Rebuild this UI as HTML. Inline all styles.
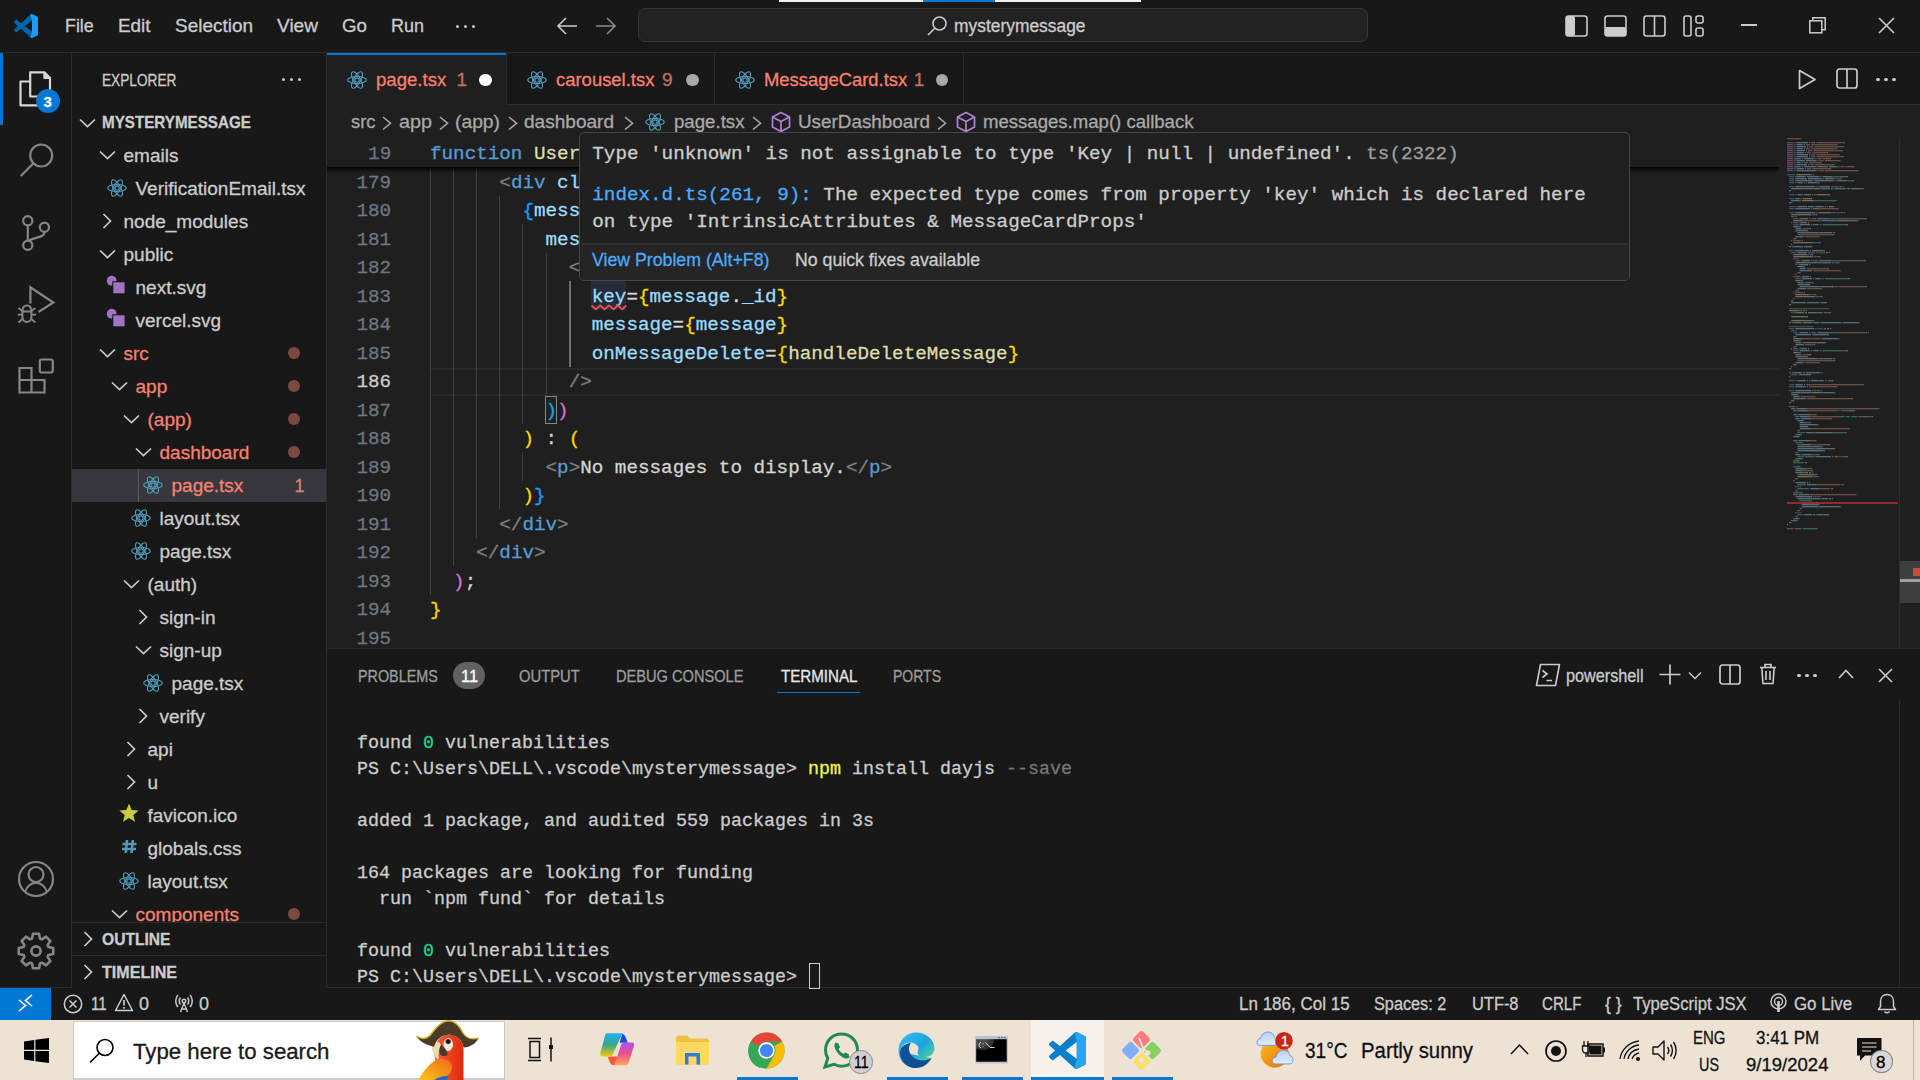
<!DOCTYPE html>
<html><head><meta charset="utf-8"><style>
html,body{margin:0;padding:0;width:1920px;height:1080px;overflow:hidden;background:#181818;}
.a{position:absolute;}
.t{position:absolute;white-space:pre;line-height:1em;transform-origin:0 0;-webkit-text-stroke:0.3px currentColor;}
svg.a{overflow:visible;}
</style></head><body>
<div class="a" style="left:0px;top:0px;width:1920px;height:52px;background:#181818;"></div>
<div class="a" style="left:0px;top:52px;width:1920px;height:1px;background:#2b2b2b;"></div>
<div class="a" style="left:0px;top:53px;width:71px;height:935px;background:#181818;"></div>
<div class="a" style="left:71px;top:53px;width:1px;height:935px;background:#2b2b2b;"></div>
<div class="a" style="left:72px;top:53px;width:254px;height:935px;background:#181818;"></div>
<div class="a" style="left:326px;top:53px;width:1px;height:935px;background:#2b2b2b;"></div>
<div class="a" style="left:327px;top:53px;width:1593px;height:51px;background:#181818;"></div>
<div class="a" style="left:327px;top:104px;width:1593px;height:1px;background:#2b2b2b;"></div>
<div class="a" style="left:327px;top:105px;width:1593px;height:543px;background:#1f1f1f;"></div>
<div class="a" style="left:327px;top:648px;width:1593px;height:1px;background:#2b2b2b;"></div>
<div class="a" style="left:327px;top:649px;width:1593px;height:339px;background:#181818;"></div>
<div class="a" style="left:0px;top:987px;width:1920px;height:1px;background:#2b2b2b;"></div>
<div class="a" style="left:0px;top:988px;width:1920px;height:32px;background:#181818;"></div>
<div class="a" style="left:0px;top:1020px;width:1920px;height:60px;background:#eee2d5;"></div>
<svg class="a" style="left:14px;top:14px;" width="24" height="24" viewBox="0 0 24 24"><path fill="#0065a9" d="M23.15 2.587L18.21.21a1.494 1.494 0 0 0-1.705.29l-9.46 8.63-4.12-3.128a.999.999 0 0 0-1.276.057L.327 7.261A1 1 0 0 0 .326 8.74L3.899 12 .326 15.26a1 1 0 0 0 .001 1.479L1.65 17.94a.999.999 0 0 0 1.276.057l4.12-3.128 9.46 8.63a1.492 1.492 0 0 0 1.704.29l4.942-2.377A1.5 1.5 0 0 0 24 20.06V3.939a1.5 1.5 0 0 0-.85-1.352zm-5.146 14.861L10.826 12l7.178-5.448v10.896z"/><path fill="#1f9cf0" d="M18.21.21a1.494 1.494 0 0 0-1.705.29L18.004 6.552v10.896L16.505 23.5a1.492 1.492 0 0 0 1.704.29l4.942-2.377A1.5 1.5 0 0 0 24 20.06V3.939a1.5 1.5 0 0 0-.85-1.352z"/></svg>
<div class="t" id="t0" style="transform:scaleX(0.9388);left:65px;top:16.42px;font-size:19px;font-family:'Liberation Sans', sans-serif;color:#cccccc;font-weight:400;">File</div>
<div class="t" id="t1" style="transform:scaleX(0.9924);left:118px;top:16.42px;font-size:19px;font-family:'Liberation Sans', sans-serif;color:#cccccc;font-weight:400;">Edit</div>
<div class="t" id="t2" style="transform:scaleX(0.9978);left:174.5px;top:16.42px;font-size:19px;font-family:'Liberation Sans', sans-serif;color:#cccccc;font-weight:400;">Selection</div>
<div class="t" id="t3" style="transform:scaleX(1.0038);left:277px;top:16.42px;font-size:19px;font-family:'Liberation Sans', sans-serif;color:#cccccc;font-weight:400;">View</div>
<div class="t" id="t4" style="transform:scaleX(0.9858);left:341.75px;top:16.42px;font-size:19px;font-family:'Liberation Sans', sans-serif;color:#cccccc;font-weight:400;">Go</div>
<div class="t" id="t5" style="transform:scaleX(0.9467);left:391.25px;top:16.42px;font-size:19px;font-family:'Liberation Sans', sans-serif;color:#cccccc;font-weight:400;">Run</div>
<div class="a" style="left:455.5px;top:24.5px;width:3px;height:3px;background:#cccccc;border-radius:50%;"></div>
<div class="a" style="left:463.5px;top:24.5px;width:3px;height:3px;background:#cccccc;border-radius:50%;"></div>
<div class="a" style="left:471.5px;top:24.5px;width:3px;height:3px;background:#cccccc;border-radius:50%;"></div>
<svg class="a" style="left:556px;top:16px;" width="22" height="20" viewBox="0 0 22 20"><path d="M2 10h19M10 2L2 10l8 8" fill="none" stroke="#cccccc" stroke-width="1.6"/></svg>
<svg class="a" style="left:595px;top:16px;" width="22" height="20" viewBox="0 0 22 20"><path d="M1 10h19M12 2l8 8-8 8" fill="none" stroke="#8a8a8a" stroke-width="1.6"/></svg>
<div class="a" style="left:638px;top:8px;width:730px;height:34px;background:#222222;box-sizing:border-box;border:1px solid #363636;border-radius:7px;"></div>
<svg class="a" style="left:926px;top:15px;" width="22" height="22" viewBox="0 0 22 22"><circle cx="13.5" cy="8.5" r="6.5" fill="none" stroke="#cccccc" stroke-width="1.6"/><path d="M9 13L2 20" stroke="#cccccc" stroke-width="1.6"/></svg>
<div class="t" id="t6" style="transform:scaleX(0.9666);left:954px;top:16.76px;font-size:18px;font-family:'Liberation Sans', sans-serif;color:#cccccc;font-weight:400;">mysterymessage</div>
<div class="a" style="left:779px;top:0px;width:144px;height:2px;background:#f0f0f0;"></div>
<div class="a" style="left:923px;top:0px;width:72px;height:2px;background:#0078d4;"></div>
<div class="a" style="left:995px;top:0px;width:146px;height:2px;background:#f0f0f0;"></div>
<svg class="a" style="left:1565px;top:15px;" width="23" height="22" viewBox="0 0 23 22"><rect x="1" y="1" width="21" height="20" rx="2.5" fill="none" stroke="#cccccc" stroke-width="1.6"/><rect x="1" y="1" width="9" height="20" rx="2" fill="#cccccc"/></svg>
<svg class="a" style="left:1604px;top:15px;" width="23" height="22" viewBox="0 0 23 22"><rect x="1" y="1" width="21" height="20" rx="2.5" fill="none" stroke="#cccccc" stroke-width="1.6"/><rect x="1" y="12" width="21" height="9" rx="2" fill="#cccccc"/></svg>
<svg class="a" style="left:1643px;top:15px;" width="23" height="22" viewBox="0 0 23 22"><rect x="1" y="1" width="21" height="20" rx="2.5" fill="none" stroke="#cccccc" stroke-width="1.6"/><path d="M11.5 1v20" stroke="#cccccc" stroke-width="1.6"/></svg>
<svg class="a" style="left:1683px;top:15px;" width="22" height="22" viewBox="0 0 22 22"><rect x="1" y="1" width="7" height="20" rx="2" fill="none" stroke="#cccccc" stroke-width="1.6"/><rect x="13" y="1" width="7" height="7" rx="2" fill="none" stroke="#cccccc" stroke-width="1.6"/><rect x="13" y="13" width="7" height="8" rx="2" fill="none" stroke="#cccccc" stroke-width="1.6"/></svg>
<div class="a" style="left:1741px;top:24px;width:15.5px;height:1.6px;background:#cccccc;"></div>
<svg class="a" style="left:1809px;top:17px;" width="17" height="17" viewBox="0 0 17 17"><rect x="0.8" y="3.8" width="12" height="12" fill="none" stroke="#cccccc" stroke-width="1.5"/><path d="M3.8 3.8V0.8h12.4v12h-3.4" fill="none" stroke="#cccccc" stroke-width="1.5"/></svg>
<svg class="a" style="left:1878px;top:17px;" width="17" height="17" viewBox="0 0 17 17"><path d="M1 1l15 15M16 1L1 16" stroke="#cccccc" stroke-width="1.6"/></svg>
<div class="a" style="left:0px;top:53px;width:3px;height:72px;background:#0078d4;"></div>
<svg class="a" style="left:0px;top:0px;" width="72" height="130" viewBox="0 0 72 130"><g fill="none" stroke="#d7d7d7" stroke-width="2.2" stroke-linejoin="round">
<path d="M30.2 72.3H44.4L50 78V96.5H30.2Z"/><path d="M44.4 72.3V78H50" fill="#d7d7d7"/>
<path d="M30 81.5H20.5V105.3H39"/></g>
<circle cx="48" cy="101" r="12" fill="#0078d4"/></svg>
<div class="t" id="t7" style="left:43.5px;top:94.30px;font-size:15px;font-family:'Liberation Sans', sans-serif;color:#ffffff;font-weight:700;">3</div>
<svg class="a" style="left:0px;top:130px;" width="72" height="300" viewBox="0 0 72 300"><g fill="none" stroke="#868686" stroke-width="2.2">
<circle cx="41.2" cy="25.5" r="11"/><path d="M33.2 33.5L20.8 46"/>
<circle cx="27.8" cy="90.7" r="4.6"/><circle cx="27.8" cy="115.3" r="4.6"/><circle cx="44.4" cy="97.3" r="4.6"/>
<path d="M27.8 95.3V110.7"/><path d="M44.4 101.9C44.4 108 36 106.5 28.5 110.8"/>
<path d="M30.4 173.6V157.4L53.3 172.5L38.5 182"/>
<path d="M22.4 181.5C22.4 177.5 24.5 175.4 26.9 175.4C29.3 175.4 31.4 177.5 31.4 181.5ZM22.4 181.5V187C22.4 190 24.5 192 26.9 192C29.3 192 31.4 190 31.4 187V181.5" stroke-width="2"/>
<path d="M18.5 178L22.4 181M35.3 178L31.4 181M17.8 184.7H22.4M31.4 184.7H36M18.5 192.5L22.4 189M35.3 192.5L31.4 189" stroke-width="1.8"/>
<path d="M19.5 238H31.5V250H19.5ZM31.5 250V262.5H19.5V250M31.5 250H44.5V262.5H31.5"/>
<rect x="39.8" y="229.5" width="13" height="13" rx="2"/>
</g></svg>
<svg class="a" style="left:0px;top:850px;" width="72" height="130" viewBox="0 0 72 130"><g fill="none" stroke="#868686" stroke-width="2.2">
<circle cx="36" cy="29" r="17"/><circle cx="36" cy="24.5" r="7.5"/><path d="M25 42C27 36 31 33 36 33C41 33 45 36 47 42"/>
</g></svg>
<svg class="a" style="left:0px;top:0px;" width="72" height="1000" viewBox="0 0 72 1000"><path d="M53.23 947.96 L53.23 954.04 L48.36 955.02 L47.58 956.90 L50.34 961.04 L46.04 965.34 L41.90 962.58 L40.02 963.36 L39.04 968.23 L32.96 968.23 L31.98 963.36 L30.10 962.58 L25.96 965.34 L21.66 961.04 L24.42 956.90 L23.64 955.02 L18.77 954.04 L18.77 947.96 L23.64 946.98 L24.42 945.10 L21.66 940.96 L25.96 936.66 L30.10 939.42 L31.98 938.64 L32.96 933.77 L39.04 933.77 L40.02 938.64 L41.90 939.42 L46.04 936.66 L50.34 940.96 L47.58 945.10 L48.36 946.98Z" fill="none" stroke="#868686" stroke-width="2.6" stroke-linejoin="round"/><circle cx="36" cy="951" r="4.6" fill="none" stroke="#868686" stroke-width="2.6"/></svg>
<div class="t" id="t8" style="transform:scaleX(0.8289);left:102.4px;top:72.03px;font-size:16.5px;font-family:'Liberation Sans', sans-serif;color:#cccccc;font-weight:400;">EXPLORER</div>
<div class="a" style="left:281.9px;top:77.5px;width:3.2px;height:3.2px;background:#cccccc;border-radius:50%;"></div>
<div class="a" style="left:289.9px;top:77.5px;width:3.2px;height:3.2px;background:#cccccc;border-radius:50%;"></div>
<div class="a" style="left:297.9px;top:77.5px;width:3.2px;height:3.2px;background:#cccccc;border-radius:50%;"></div>
<svg class="a" style="left:78.5px;top:117.5px;" width="17" height="10" viewBox="0 0 17 10"><path d="M1 1.5L8.5 8.5L16 1.5" fill="none" stroke="#cccccc" stroke-width="1.7"/></svg>
<div class="t" id="t9" style="transform:scaleX(0.9210);left:102.4px;top:113.93px;font-size:16.5px;font-family:'Liberation Sans', sans-serif;color:#cccccc;font-weight:700;">MYSTERYMESSAGE</div>
<div class="a" style="left:72px;top:468.5px;width:254px;height:33px;background:#37373d;"></div>
<div class="a" style="left:138px;top:468.5px;width:1px;height:33px;background:#585858;"></div>
<svg class="a" style="left:98.5px;top:150.0px;" width="17" height="10" viewBox="0 0 17 10"><path d="M1 1.5L8.5 8.5L16 1.5" fill="none" stroke="#cccccc" stroke-width="1.7"/></svg>
<div class="t" id="t10" style="left:123.5px;top:145.72px;font-size:19px;font-family:'Liberation Sans', sans-serif;color:#cccccc;font-weight:400;">emails</div>
<svg class="a" style="left:105.7px;top:176.7px;" width="22" height="22" viewBox="0 0 22 22"><g fill="none" stroke="#519aba" stroke-width="1.15"><ellipse cx="11" cy="11" rx="9.3" ry="3.5"/><ellipse cx="11" cy="11" rx="9.3" ry="3.5" transform="rotate(60 11 11)"/><ellipse cx="11" cy="11" rx="9.3" ry="3.5" transform="rotate(120 11 11)"/><circle cx="11" cy="11" r="2.2"/></g></svg>
<div class="t" id="t11" style="left:135.5px;top:178.72px;font-size:19px;font-family:'Liberation Sans', sans-serif;color:#cccccc;font-weight:400;">VerificationEmail.tsx</div>
<svg class="a" style="left:102.0px;top:213.0px;" width="10" height="16" viewBox="0 0 10 16"><path d="M1.5 1L8.5 8.0L1.5 15" fill="none" stroke="#cccccc" stroke-width="1.7"/></svg>
<div class="t" id="t12" style="left:123.5px;top:211.72px;font-size:19px;font-family:'Liberation Sans', sans-serif;color:#cccccc;font-weight:400;">node_modules</div>
<svg class="a" style="left:98.5px;top:249.0px;" width="17" height="10" viewBox="0 0 17 10"><path d="M1 1.5L8.5 8.5L16 1.5" fill="none" stroke="#cccccc" stroke-width="1.7"/></svg>
<div class="t" id="t13" style="left:123.5px;top:244.72px;font-size:19px;font-family:'Liberation Sans', sans-serif;color:#cccccc;font-weight:400;">public</div>
<svg class="a" style="left:107.2px;top:276.0px;" width="20" height="20" viewBox="0 0 20 20"><circle cx="4.7" cy="4.7" r="4.9" fill="#a074c4"/><rect x="5.3" y="5.3" width="12.5" height="12" fill="#181818"/><rect x="6.3" y="6.3" width="11.3" height="11" fill="#a074c4"/></svg>
<div class="t" id="t14" style="left:135.5px;top:277.72px;font-size:19px;font-family:'Liberation Sans', sans-serif;color:#cccccc;font-weight:400;">next.svg</div>
<svg class="a" style="left:107.2px;top:309.0px;" width="20" height="20" viewBox="0 0 20 20"><circle cx="4.7" cy="4.7" r="4.9" fill="#a074c4"/><rect x="5.3" y="5.3" width="12.5" height="12" fill="#181818"/><rect x="6.3" y="6.3" width="11.3" height="11" fill="#a074c4"/></svg>
<div class="t" id="t15" style="left:135.5px;top:310.72px;font-size:19px;font-family:'Liberation Sans', sans-serif;color:#cccccc;font-weight:400;">vercel.svg</div>
<svg class="a" style="left:98.5px;top:348.0px;" width="17" height="10" viewBox="0 0 17 10"><path d="M1 1.5L8.5 8.5L16 1.5" fill="none" stroke="#cccccc" stroke-width="1.7"/></svg>
<div class="t" id="t16" style="left:123.5px;top:343.72px;font-size:19px;font-family:'Liberation Sans', sans-serif;color:#f88070;font-weight:400;">src</div>
<div class="a" style="left:288px;top:346.5px;width:12px;height:12px;background:#7a4a42;border-radius:50%;"></div>
<svg class="a" style="left:110.5px;top:381.0px;" width="17" height="10" viewBox="0 0 17 10"><path d="M1 1.5L8.5 8.5L16 1.5" fill="none" stroke="#cccccc" stroke-width="1.7"/></svg>
<div class="t" id="t17" style="left:135.5px;top:376.72px;font-size:19px;font-family:'Liberation Sans', sans-serif;color:#f88070;font-weight:400;">app</div>
<div class="a" style="left:288px;top:379.5px;width:12px;height:12px;background:#7a4a42;border-radius:50%;"></div>
<svg class="a" style="left:122.5px;top:414.0px;" width="17" height="10" viewBox="0 0 17 10"><path d="M1 1.5L8.5 8.5L16 1.5" fill="none" stroke="#cccccc" stroke-width="1.7"/></svg>
<div class="t" id="t18" style="left:147.5px;top:409.72px;font-size:19px;font-family:'Liberation Sans', sans-serif;color:#f88070;font-weight:400;">(app)</div>
<div class="a" style="left:288px;top:412.5px;width:12px;height:12px;background:#7a4a42;border-radius:50%;"></div>
<svg class="a" style="left:134.5px;top:447.0px;" width="17" height="10" viewBox="0 0 17 10"><path d="M1 1.5L8.5 8.5L16 1.5" fill="none" stroke="#cccccc" stroke-width="1.7"/></svg>
<div class="t" id="t19" style="left:159.5px;top:442.72px;font-size:19px;font-family:'Liberation Sans', sans-serif;color:#f88070;font-weight:400;">dashboard</div>
<div class="a" style="left:288px;top:445.5px;width:12px;height:12px;background:#7a4a42;border-radius:50%;"></div>
<svg class="a" style="left:141.7px;top:473.7px;" width="22" height="22" viewBox="0 0 22 22"><g fill="none" stroke="#519aba" stroke-width="1.15"><ellipse cx="11" cy="11" rx="9.3" ry="3.5"/><ellipse cx="11" cy="11" rx="9.3" ry="3.5" transform="rotate(60 11 11)"/><ellipse cx="11" cy="11" rx="9.3" ry="3.5" transform="rotate(120 11 11)"/><circle cx="11" cy="11" r="2.2"/></g></svg>
<div class="t" id="t20" style="left:171.5px;top:475.72px;font-size:19px;font-family:'Liberation Sans', sans-serif;color:#f88070;font-weight:400;">page.tsx</div>
<div class="t" id="t21" style="left:294.5px;top:476.56px;font-size:18px;font-family:'Liberation Sans', sans-serif;color:#d9826f;font-weight:400;">1</div>
<svg class="a" style="left:129.7px;top:506.70000000000005px;" width="22" height="22" viewBox="0 0 22 22"><g fill="none" stroke="#519aba" stroke-width="1.15"><ellipse cx="11" cy="11" rx="9.3" ry="3.5"/><ellipse cx="11" cy="11" rx="9.3" ry="3.5" transform="rotate(60 11 11)"/><ellipse cx="11" cy="11" rx="9.3" ry="3.5" transform="rotate(120 11 11)"/><circle cx="11" cy="11" r="2.2"/></g></svg>
<div class="t" id="t22" style="left:159.5px;top:508.72px;font-size:19px;font-family:'Liberation Sans', sans-serif;color:#cccccc;font-weight:400;">layout.tsx</div>
<svg class="a" style="left:129.7px;top:539.7px;" width="22" height="22" viewBox="0 0 22 22"><g fill="none" stroke="#519aba" stroke-width="1.15"><ellipse cx="11" cy="11" rx="9.3" ry="3.5"/><ellipse cx="11" cy="11" rx="9.3" ry="3.5" transform="rotate(60 11 11)"/><ellipse cx="11" cy="11" rx="9.3" ry="3.5" transform="rotate(120 11 11)"/><circle cx="11" cy="11" r="2.2"/></g></svg>
<div class="t" id="t23" style="left:159.5px;top:541.72px;font-size:19px;font-family:'Liberation Sans', sans-serif;color:#cccccc;font-weight:400;">page.tsx</div>
<svg class="a" style="left:122.5px;top:579.0px;" width="17" height="10" viewBox="0 0 17 10"><path d="M1 1.5L8.5 8.5L16 1.5" fill="none" stroke="#cccccc" stroke-width="1.7"/></svg>
<div class="t" id="t24" style="left:147.5px;top:574.72px;font-size:19px;font-family:'Liberation Sans', sans-serif;color:#cccccc;font-weight:400;">(auth)</div>
<svg class="a" style="left:138.0px;top:609.0px;" width="10" height="16" viewBox="0 0 10 16"><path d="M1.5 1L8.5 8.0L1.5 15" fill="none" stroke="#cccccc" stroke-width="1.7"/></svg>
<div class="t" id="t25" style="left:159.5px;top:607.72px;font-size:19px;font-family:'Liberation Sans', sans-serif;color:#cccccc;font-weight:400;">sign-in</div>
<svg class="a" style="left:134.5px;top:645.0px;" width="17" height="10" viewBox="0 0 17 10"><path d="M1 1.5L8.5 8.5L16 1.5" fill="none" stroke="#cccccc" stroke-width="1.7"/></svg>
<div class="t" id="t26" style="left:159.5px;top:640.72px;font-size:19px;font-family:'Liberation Sans', sans-serif;color:#cccccc;font-weight:400;">sign-up</div>
<svg class="a" style="left:141.7px;top:671.7px;" width="22" height="22" viewBox="0 0 22 22"><g fill="none" stroke="#519aba" stroke-width="1.15"><ellipse cx="11" cy="11" rx="9.3" ry="3.5"/><ellipse cx="11" cy="11" rx="9.3" ry="3.5" transform="rotate(60 11 11)"/><ellipse cx="11" cy="11" rx="9.3" ry="3.5" transform="rotate(120 11 11)"/><circle cx="11" cy="11" r="2.2"/></g></svg>
<div class="t" id="t27" style="left:171.5px;top:673.72px;font-size:19px;font-family:'Liberation Sans', sans-serif;color:#cccccc;font-weight:400;">page.tsx</div>
<svg class="a" style="left:138.0px;top:708.0px;" width="10" height="16" viewBox="0 0 10 16"><path d="M1.5 1L8.5 8.0L1.5 15" fill="none" stroke="#cccccc" stroke-width="1.7"/></svg>
<div class="t" id="t28" style="left:159.5px;top:706.72px;font-size:19px;font-family:'Liberation Sans', sans-serif;color:#cccccc;font-weight:400;">verify</div>
<svg class="a" style="left:126.0px;top:741.0px;" width="10" height="16" viewBox="0 0 10 16"><path d="M1.5 1L8.5 8.0L1.5 15" fill="none" stroke="#cccccc" stroke-width="1.7"/></svg>
<div class="t" id="t29" style="left:147.5px;top:739.72px;font-size:19px;font-family:'Liberation Sans', sans-serif;color:#cccccc;font-weight:400;">api</div>
<svg class="a" style="left:126.0px;top:774.0px;" width="10" height="16" viewBox="0 0 10 16"><path d="M1.5 1L8.5 8.0L1.5 15" fill="none" stroke="#cccccc" stroke-width="1.7"/></svg>
<div class="t" id="t30" style="left:147.5px;top:772.72px;font-size:19px;font-family:'Liberation Sans', sans-serif;color:#cccccc;font-weight:400;">u</div>
<svg class="a" style="left:119.0px;top:803.0px;" width="20" height="20" viewBox="0 0 20 20"><path d="M10.00 0.40 L12.65 6.96 L19.70 7.45 L14.28 11.99 L16.00 18.85 L10.00 15.10 L4.00 18.85 L5.72 11.99 L0.30 7.45 L7.35 6.96Z" fill="#cbcb41"/></svg>
<div class="t" id="t31" style="left:147.5px;top:805.72px;font-size:19px;font-family:'Liberation Sans', sans-serif;color:#cccccc;font-weight:400;">favicon.ico</div>
<svg class="a" style="left:121.5px;top:839.0px;" width="15" height="15" viewBox="0 0 15 15"><path d="M5 1L3.8 14M10.8 1L9.6 14M0.5 5H14.5M0 10H14" stroke="#519aba" stroke-width="2.6"/></svg>
<div class="t" id="t32" style="left:147.5px;top:838.72px;font-size:19px;font-family:'Liberation Sans', sans-serif;color:#cccccc;font-weight:400;">globals.css</div>
<svg class="a" style="left:117.69999999999999px;top:869.7px;" width="22" height="22" viewBox="0 0 22 22"><g fill="none" stroke="#519aba" stroke-width="1.15"><ellipse cx="11" cy="11" rx="9.3" ry="3.5"/><ellipse cx="11" cy="11" rx="9.3" ry="3.5" transform="rotate(60 11 11)"/><ellipse cx="11" cy="11" rx="9.3" ry="3.5" transform="rotate(120 11 11)"/><circle cx="11" cy="11" r="2.2"/></g></svg>
<div class="t" id="t33" style="left:147.5px;top:871.72px;font-size:19px;font-family:'Liberation Sans', sans-serif;color:#cccccc;font-weight:400;">layout.tsx</div>
<svg class="a" style="left:110.5px;top:909.0px;" width="17" height="10" viewBox="0 0 17 10"><path d="M1 1.5L8.5 8.5L16 1.5" fill="none" stroke="#cccccc" stroke-width="1.7"/></svg>
<div class="t" id="t34" style="left:135.5px;top:904.72px;font-size:19px;font-family:'Liberation Sans', sans-serif;color:#f88070;font-weight:400;">components</div>
<div class="a" style="left:288px;top:907.5px;width:12px;height:12px;background:#7a4a42;border-radius:50%;"></div>
<div class="a" style="left:72px;top:921.5px;width:254px;height:66.5px;background:#181818;"></div>
<div class="a" style="left:72px;top:921.5px;width:254px;height:1px;background:#2b2b2b;"></div>
<div class="a" style="left:72px;top:954.5px;width:254px;height:1px;background:#2b2b2b;"></div>
<svg class="a" style="left:83px;top:930.5px;" width="10" height="16" viewBox="0 0 10 16"><path d="M1.5 1L8.5 8.0L1.5 15" fill="none" stroke="#cccccc" stroke-width="1.7"/></svg>
<div class="t" id="t35" style="transform:scaleX(0.9458);left:102.4px;top:931.03px;font-size:16.5px;font-family:'Liberation Sans', sans-serif;color:#cccccc;font-weight:700;">OUTLINE</div>
<svg class="a" style="left:83px;top:963.5px;" width="10" height="16" viewBox="0 0 10 16"><path d="M1.5 1L8.5 8.0L1.5 15" fill="none" stroke="#cccccc" stroke-width="1.7"/></svg>
<div class="t" id="t36" style="transform:scaleX(0.9740);left:102.4px;top:964.03px;font-size:16.5px;font-family:'Liberation Sans', sans-serif;color:#cccccc;font-weight:700;">TIMELINE</div>
<div class="a" style="left:327px;top:53px;width:179px;height:52px;background:#1f1f1f;"></div>
<div class="a" style="left:327px;top:53px;width:179px;height:2px;background:#0078d4;"></div>
<div class="a" style="left:506px;top:53px;width:1px;height:51px;background:#2b2b2b;"></div>
<div class="a" style="left:714px;top:53px;width:1px;height:51px;background:#2b2b2b;"></div>
<div class="a" style="left:963px;top:53px;width:1px;height:51px;background:#2b2b2b;"></div>
<svg class="a" style="left:345.5px;top:68.5px;" width="22" height="22" viewBox="0 0 22 22"><g fill="none" stroke="#519aba" stroke-width="1.15"><ellipse cx="11" cy="11" rx="9.3" ry="3.5"/><ellipse cx="11" cy="11" rx="9.3" ry="3.5" transform="rotate(60 11 11)"/><ellipse cx="11" cy="11" rx="9.3" ry="3.5" transform="rotate(120 11 11)"/><circle cx="11" cy="11" r="2.2"/></g></svg>
<div class="t" id="t37" style="transform:scaleX(0.9773);left:375.8px;top:70.42px;font-size:19px;font-family:'Liberation Sans', sans-serif;color:#f88070;font-weight:400;">page.tsx</div>
<div class="t" id="t38" style="left:456.5px;top:70.42px;font-size:19px;font-family:'Liberation Sans', sans-serif;color:#c0705f;font-weight:400;">1</div>
<div class="a" style="left:479px;top:73.5px;width:12.5px;height:12.5px;background:#ffffff;border-radius:50%;"></div>
<svg class="a" style="left:525.5px;top:68.5px;" width="22" height="22" viewBox="0 0 22 22"><g fill="none" stroke="#519aba" stroke-width="1.15"><ellipse cx="11" cy="11" rx="9.3" ry="3.5"/><ellipse cx="11" cy="11" rx="9.3" ry="3.5" transform="rotate(60 11 11)"/><ellipse cx="11" cy="11" rx="9.3" ry="3.5" transform="rotate(120 11 11)"/><circle cx="11" cy="11" r="2.2"/></g></svg>
<div class="t" id="t39" style="transform:scaleX(0.9707);left:555.6px;top:70.42px;font-size:19px;font-family:'Liberation Sans', sans-serif;color:#f88070;font-weight:400;">carousel.tsx</div>
<div class="t" id="t40" style="left:662px;top:70.42px;font-size:19px;font-family:'Liberation Sans', sans-serif;color:#c0705f;font-weight:400;">9</div>
<div class="a" style="left:686px;top:73.5px;width:12.5px;height:12.5px;background:#a8a8a8;border-radius:50%;"></div>
<svg class="a" style="left:733.5px;top:68.5px;" width="22" height="22" viewBox="0 0 22 22"><g fill="none" stroke="#519aba" stroke-width="1.15"><ellipse cx="11" cy="11" rx="9.3" ry="3.5"/><ellipse cx="11" cy="11" rx="9.3" ry="3.5" transform="rotate(60 11 11)"/><ellipse cx="11" cy="11" rx="9.3" ry="3.5" transform="rotate(120 11 11)"/><circle cx="11" cy="11" r="2.2"/></g></svg>
<div class="t" id="t41" style="transform:scaleX(0.9686);left:763.8px;top:70.42px;font-size:19px;font-family:'Liberation Sans', sans-serif;color:#f88070;font-weight:400;">MessageCard.tsx</div>
<div class="t" id="t42" style="left:913.7px;top:70.42px;font-size:19px;font-family:'Liberation Sans', sans-serif;color:#c0705f;font-weight:400;">1</div>
<div class="a" style="left:935.5px;top:73.5px;width:12.5px;height:12.5px;background:#a8a8a8;border-radius:50%;"></div>
<svg class="a" style="left:1798px;top:69px;" width="19" height="21" viewBox="0 0 19 21"><path d="M1.5 1.5L17 10.5L1.5 19.5Z" fill="none" stroke="#cccccc" stroke-width="1.7" stroke-linejoin="round"/></svg>
<svg class="a" style="left:1836px;top:68px;" width="22" height="21" viewBox="0 0 22 21"><rect x="1" y="1" width="20" height="19" rx="2.5" fill="none" stroke="#cccccc" stroke-width="1.7"/><path d="M11 1v19" stroke="#cccccc" stroke-width="1.7"/></svg>
<div class="a" style="left:1876.4px;top:77.5px;width:3.2px;height:3.2px;background:#cccccc;border-radius:50%;"></div>
<div class="a" style="left:1884.4px;top:77.5px;width:3.2px;height:3.2px;background:#cccccc;border-radius:50%;"></div>
<div class="a" style="left:1892.4px;top:77.5px;width:3.2px;height:3.2px;background:#cccccc;border-radius:50%;"></div>
<div class="t" id="t43" style="transform:scaleX(0.9673);left:351px;top:112.42px;font-size:19px;font-family:'Liberation Sans', sans-serif;color:#a9a9a9;font-weight:400;">src</div>
<svg class="a" style="left:381.5px;top:115.5px;" width="10" height="15" viewBox="0 0 10 15"><path d="M1 1L8.5 7.25L1 13.5" fill="none" stroke="#a9a9a9" stroke-width="1.6"/></svg>
<div class="t" id="t44" style="transform:scaleX(1.0409);left:398.5px;top:112.42px;font-size:19px;font-family:'Liberation Sans', sans-serif;color:#a9a9a9;font-weight:400;">app</div>
<svg class="a" style="left:439.4px;top:115.5px;" width="10" height="15" viewBox="0 0 10 15"><path d="M1 1L8.5 7.25L1 13.5" fill="none" stroke="#a9a9a9" stroke-width="1.6"/></svg>
<div class="t" id="t45" style="transform:scaleX(1.0144);left:455px;top:112.42px;font-size:19px;font-family:'Liberation Sans', sans-serif;color:#a9a9a9;font-weight:400;">(app)</div>
<svg class="a" style="left:507.5px;top:115.5px;" width="10" height="15" viewBox="0 0 10 15"><path d="M1 1L8.5 7.25L1 13.5" fill="none" stroke="#a9a9a9" stroke-width="1.6"/></svg>
<div class="t" id="t46" style="transform:scaleX(1.0023);left:524px;top:112.42px;font-size:19px;font-family:'Liberation Sans', sans-serif;color:#a9a9a9;font-weight:400;">dashboard</div>
<svg class="a" style="left:624.2px;top:115.5px;" width="10" height="15" viewBox="0 0 10 15"><path d="M1 1L8.5 7.25L1 13.5" fill="none" stroke="#a9a9a9" stroke-width="1.6"/></svg>
<svg class="a" style="left:643.5px;top:110.5px;" width="22" height="22" viewBox="0 0 22 22"><g fill="none" stroke="#519aba" stroke-width="1.15"><ellipse cx="11" cy="11" rx="9.3" ry="3.5"/><ellipse cx="11" cy="11" rx="9.3" ry="3.5" transform="rotate(60 11 11)"/><ellipse cx="11" cy="11" rx="9.3" ry="3.5" transform="rotate(120 11 11)"/><circle cx="11" cy="11" r="2.2"/></g></svg>
<div class="t" id="t47" style="transform:scaleX(0.9815);left:674px;top:112.42px;font-size:19px;font-family:'Liberation Sans', sans-serif;color:#a9a9a9;font-weight:400;">page.tsx</div>
<svg class="a" style="left:751.6px;top:115.5px;" width="10" height="15" viewBox="0 0 10 15"><path d="M1 1L8.5 7.25L1 13.5" fill="none" stroke="#a9a9a9" stroke-width="1.6"/></svg>
<svg class="a" style="left:770.5px;top:110.5px;" width="20" height="22" viewBox="0 0 20 22"><g fill="none" stroke="#b180d7" stroke-width="1.7" stroke-linejoin="round"><path d="M10 1.5L18.5 6V16L10 20.5L1.5 16V6Z"/><path d="M1.5 6L10 10.5L18.5 6M10 10.5V20.5"/></g></svg>
<div class="t" id="t48" style="transform:scaleX(0.9919);left:797.5px;top:112.42px;font-size:19px;font-family:'Liberation Sans', sans-serif;color:#a9a9a9;font-weight:400;">UserDashboard</div>
<svg class="a" style="left:937.3px;top:115.5px;" width="10" height="15" viewBox="0 0 10 15"><path d="M1 1L8.5 7.25L1 13.5" fill="none" stroke="#a9a9a9" stroke-width="1.6"/></svg>
<svg class="a" style="left:955.5px;top:110.5px;" width="20" height="22" viewBox="0 0 20 22"><g fill="none" stroke="#b180d7" stroke-width="1.7" stroke-linejoin="round"><path d="M10 1.5L18.5 6V16L10 20.5L1.5 16V6Z"/><path d="M1.5 6L10 10.5L18.5 6M10 10.5V20.5"/></g></svg>
<div class="t" id="t49" style="transform:scaleX(0.9772);left:982.8px;top:112.42px;font-size:19px;font-family:'Liberation Sans', sans-serif;color:#a9a9a9;font-weight:400;">messages.map() callback</div>
<div class="a" style="left:430px;top:367.5px;width:1350px;height:28px;box-sizing:border-box;border-top:2px solid #282828;border-bottom:2px solid #282828;"></div>
<div class="a" style="left:430px;top:167.29999999999998px;width:1px;height:427.5px;background:#404040;"></div>
<div class="a" style="left:453px;top:167.29999999999998px;width:1px;height:399.0px;background:#404040;"></div>
<div class="a" style="left:476px;top:167.29999999999998px;width:1px;height:370.5px;background:#404040;"></div>
<div class="a" style="left:499px;top:195.79999999999998px;width:1px;height:313.5px;background:#404040;"></div>
<div class="a" style="left:522px;top:224.29999999999998px;width:1px;height:199.49999999999997px;background:#404040;"></div>
<div class="a" style="left:522px;top:452.29999999999995px;width:1px;height:28.5px;background:#404040;"></div>
<div class="a" style="left:546px;top:252.79999999999998px;width:1px;height:142.49999999999997px;background:#404040;"></div>
<div class="a" style="left:569px;top:281.29999999999995px;width:1.5px;height:85.5px;background:#707070;"></div>
<div class="a" style="left:591px;top:281px;width:35px;height:29px;background:#232c38;"></div>
<div class="a" style="left:545px;top:395.5px;width:12px;height:28px;background:#0064001a;box-sizing:border-box;border:1px solid #888888;"></div>
<div class="t" id="t50" style="left:356.5px;top:173.84px;font-size:19.25px;font-family:'Liberation Mono', monospace;color:#6e7681;font-weight:400;">179</div>
<div class="t" id="t51" style="left:430px;top:173.84px;font-size:19.25px;font-family:'Liberation Mono', monospace;color:#cccccc;font-weight:400;"><span style="color:#d4d4d4">      </span><span style="color:#808080">&lt;</span><span style="color:#569cd6">div</span><span style="color:#d4d4d4"> </span><span style="color:#9cdcfe">className</span></div>
<div class="t" id="t52" style="left:356.5px;top:202.34px;font-size:19.25px;font-family:'Liberation Mono', monospace;color:#6e7681;font-weight:400;">180</div>
<div class="t" id="t53" style="left:430px;top:202.34px;font-size:19.25px;font-family:'Liberation Mono', monospace;color:#cccccc;font-weight:400;"><span style="color:#d4d4d4">        </span><span style="color:#179fff">{</span><span style="color:#9cdcfe">messages</span></div>
<div class="t" id="t54" style="left:356.5px;top:230.84px;font-size:19.25px;font-family:'Liberation Mono', monospace;color:#6e7681;font-weight:400;">181</div>
<div class="t" id="t55" style="left:430px;top:230.84px;font-size:19.25px;font-family:'Liberation Mono', monospace;color:#cccccc;font-weight:400;"><span style="color:#d4d4d4">          </span><span style="color:#9cdcfe">messages</span></div>
<div class="t" id="t56" style="left:356.5px;top:259.34px;font-size:19.25px;font-family:'Liberation Mono', monospace;color:#6e7681;font-weight:400;">182</div>
<div class="t" id="t57" style="left:430px;top:259.34px;font-size:19.25px;font-family:'Liberation Mono', monospace;color:#cccccc;font-weight:400;"><span style="color:#d4d4d4">            </span><span style="color:#808080">&lt;</span><span style="color:#569cd6">MessageCard</span></div>
<div class="t" id="t58" style="left:356.5px;top:287.84px;font-size:19.25px;font-family:'Liberation Mono', monospace;color:#6e7681;font-weight:400;">183</div>
<div class="t" id="t59" style="left:430px;top:287.84px;font-size:19.25px;font-family:'Liberation Mono', monospace;color:#cccccc;font-weight:400;"><span style="color:#d4d4d4">              </span><span style="color:#9cdcfe">key</span><span style="color:#d4d4d4">=</span><span style="color:#ffd700">{</span><span style="color:#9cdcfe">message</span><span style="color:#d4d4d4">.</span><span style="color:#9cdcfe">_id</span><span style="color:#ffd700">}</span></div>
<div class="t" id="t60" style="left:356.5px;top:316.34px;font-size:19.25px;font-family:'Liberation Mono', monospace;color:#6e7681;font-weight:400;">184</div>
<div class="t" id="t61" style="left:430px;top:316.34px;font-size:19.25px;font-family:'Liberation Mono', monospace;color:#cccccc;font-weight:400;"><span style="color:#d4d4d4">              </span><span style="color:#9cdcfe">message</span><span style="color:#d4d4d4">=</span><span style="color:#ffd700">{</span><span style="color:#9cdcfe">message</span><span style="color:#ffd700">}</span></div>
<div class="t" id="t62" style="left:356.5px;top:344.84px;font-size:19.25px;font-family:'Liberation Mono', monospace;color:#6e7681;font-weight:400;">185</div>
<div class="t" id="t63" style="left:430px;top:344.84px;font-size:19.25px;font-family:'Liberation Mono', monospace;color:#cccccc;font-weight:400;"><span style="color:#d4d4d4">              </span><span style="color:#9cdcfe">onMessageDelete</span><span style="color:#d4d4d4">=</span><span style="color:#ffd700">{</span><span style="color:#dcdcaa">handleDeleteMessage</span><span style="color:#ffd700">}</span></div>
<div class="t" id="t64" style="left:356.5px;top:373.34px;font-size:19.25px;font-family:'Liberation Mono', monospace;color:#cccccc;font-weight:400;">186</div>
<div class="t" id="t65" style="left:430px;top:373.34px;font-size:19.25px;font-family:'Liberation Mono', monospace;color:#cccccc;font-weight:400;"><span style="color:#d4d4d4">            </span><span style="color:#808080">/&gt;</span></div>
<div class="t" id="t66" style="left:356.5px;top:401.84px;font-size:19.25px;font-family:'Liberation Mono', monospace;color:#6e7681;font-weight:400;">187</div>
<div class="t" id="t67" style="left:430px;top:401.84px;font-size:19.25px;font-family:'Liberation Mono', monospace;color:#cccccc;font-weight:400;"><span style="color:#d4d4d4">          </span><span style="color:#179fff">)</span><span style="color:#da70d6">)</span></div>
<div class="t" id="t68" style="left:356.5px;top:430.34px;font-size:19.25px;font-family:'Liberation Mono', monospace;color:#6e7681;font-weight:400;">188</div>
<div class="t" id="t69" style="left:430px;top:430.34px;font-size:19.25px;font-family:'Liberation Mono', monospace;color:#cccccc;font-weight:400;"><span style="color:#d4d4d4">        </span><span style="color:#ffd700">)</span><span style="color:#d4d4d4"> : </span><span style="color:#ffd700">(</span></div>
<div class="t" id="t70" style="left:356.5px;top:458.84px;font-size:19.25px;font-family:'Liberation Mono', monospace;color:#6e7681;font-weight:400;">189</div>
<div class="t" id="t71" style="left:430px;top:458.84px;font-size:19.25px;font-family:'Liberation Mono', monospace;color:#cccccc;font-weight:400;"><span style="color:#d4d4d4">          </span><span style="color:#808080">&lt;</span><span style="color:#569cd6">p</span><span style="color:#808080">&gt;</span><span style="color:#d4d4d4">No messages to display.</span><span style="color:#808080">&lt;/</span><span style="color:#569cd6">p</span><span style="color:#808080">&gt;</span></div>
<div class="t" id="t72" style="left:356.5px;top:487.34px;font-size:19.25px;font-family:'Liberation Mono', monospace;color:#6e7681;font-weight:400;">190</div>
<div class="t" id="t73" style="left:430px;top:487.34px;font-size:19.25px;font-family:'Liberation Mono', monospace;color:#cccccc;font-weight:400;"><span style="color:#d4d4d4">        </span><span style="color:#ffd700">)</span><span style="color:#179fff">}</span></div>
<div class="t" id="t74" style="left:356.5px;top:515.84px;font-size:19.25px;font-family:'Liberation Mono', monospace;color:#6e7681;font-weight:400;">191</div>
<div class="t" id="t75" style="left:430px;top:515.84px;font-size:19.25px;font-family:'Liberation Mono', monospace;color:#cccccc;font-weight:400;"><span style="color:#d4d4d4">      </span><span style="color:#808080">&lt;/</span><span style="color:#569cd6">div</span><span style="color:#808080">&gt;</span></div>
<div class="t" id="t76" style="left:356.5px;top:544.34px;font-size:19.25px;font-family:'Liberation Mono', monospace;color:#6e7681;font-weight:400;">192</div>
<div class="t" id="t77" style="left:430px;top:544.34px;font-size:19.25px;font-family:'Liberation Mono', monospace;color:#cccccc;font-weight:400;"><span style="color:#d4d4d4">    </span><span style="color:#808080">&lt;/</span><span style="color:#569cd6">div</span><span style="color:#808080">&gt;</span></div>
<div class="t" id="t78" style="left:356.5px;top:572.84px;font-size:19.25px;font-family:'Liberation Mono', monospace;color:#6e7681;font-weight:400;">193</div>
<div class="t" id="t79" style="left:430px;top:572.84px;font-size:19.25px;font-family:'Liberation Mono', monospace;color:#cccccc;font-weight:400;"><span style="color:#d4d4d4">  </span><span style="color:#da70d6">)</span><span style="color:#d4d4d4">;</span></div>
<div class="t" id="t80" style="left:356.5px;top:601.34px;font-size:19.25px;font-family:'Liberation Mono', monospace;color:#6e7681;font-weight:400;">194</div>
<div class="t" id="t81" style="left:430px;top:601.34px;font-size:19.25px;font-family:'Liberation Mono', monospace;color:#cccccc;font-weight:400;"><span style="color:#ffd700">}</span></div>
<div class="t" id="t82" style="left:356.5px;top:629.84px;font-size:19.25px;font-family:'Liberation Mono', monospace;color:#6e7681;font-weight:400;">195</div>
<svg class="a" style="left:591px;top:303px;" width="36" height="8" viewBox="0 0 36 8"><path d="M0.5 2.5L4.9 6.3L9.3 2.5L13.7 6.3L18.1 2.5L22.5 6.3L26.9 2.5L31.3 6.3L35.2 2.5" fill="none" stroke="#f14c4c" stroke-width="1.9" stroke-linejoin="round"/></svg>
<div class="a" style="left:327px;top:137.5px;width:1452px;height:29px;background:#1f1f1f;"></div>
<svg class="a" style="left:327px;top:166.5px;" width="1452" height="6" viewBox="0 0 1452 6"><defs><linearGradient id="sg" x1="0" y1="0" x2="0" y2="1"><stop offset="0" stop-color="#000" stop-opacity="0.9"/><stop offset="1" stop-color="#000" stop-opacity="0"/></linearGradient></defs><rect width="1452" height="6" fill="url(#sg)"/></svg>
<div class="t" id="t83" style="left:368.1px;top:145.44px;font-size:19.25px;font-family:'Liberation Mono', monospace;color:#6e7681;font-weight:400;">19</div>
<div class="t" id="t84" style="left:430px;top:145.44px;font-size:19.25px;font-family:'Liberation Mono', monospace;color:#cccccc;font-weight:400;"><span style="color:#569cd6">function</span><span style="color:#d4d4d4"> </span><span style="color:#dcdcaa">UserDashboard</span><span style="color:#d4d4d4">() {</span></div>
<div class="a" style="left:579px;top:132px;width:1051px;height:149px;background:#202020;box-sizing:border-box;border:1.5px solid #454545;border-radius:5px;"></div>
<div class="a" style="left:580.5px;top:243px;width:1048px;height:36.5px;background:#252526;border-radius:0 0 4px 4px;"></div>
<div class="a" style="left:580.5px;top:243px;width:1048px;height:1.5px;background:#2f2f2f;"></div>
<div class="t" id="t85" style="left:592.3px;top:145.24px;font-size:19.25px;font-family:'Liberation Mono', monospace;color:#cccccc;font-weight:400;"><span style="color:#cccccc">Type &#x27;unknown&#x27; is not assignable to type &#x27;Key | null | undefined&#x27;.</span><span style="color:#9d9d9d"> ts(2322)</span></div>
<div class="t" id="t86" style="left:592.3px;top:185.84px;font-size:19.25px;font-family:'Liberation Mono', monospace;color:#cccccc;font-weight:400;"><span style="color:#4daafc">index.d.ts(261, 9):</span><span style="color:#cccccc"> The expected type comes from property &#x27;key&#x27; which is declared here</span></div>
<div class="t" id="t87" style="left:592.3px;top:213.24px;font-size:19.25px;font-family:'Liberation Mono', monospace;color:#cccccc;font-weight:400;"><span style="color:#cccccc">on type &#x27;IntrinsicAttributes &amp; MessageCardProps&#x27;</span></div>
<div class="t" id="t88" style="transform:scaleX(0.9325);left:592.3px;top:249.92px;font-size:19px;font-family:'Liberation Sans', sans-serif;color:#4daafc;font-weight:400;">View Problem (Alt+F8)</div>
<div class="t" id="t89" style="transform:scaleX(0.9318);left:794.8px;top:249.92px;font-size:19px;font-family:'Liberation Sans', sans-serif;color:#cccccc;font-weight:400;">No quick fixes available</div>
<svg class="a" style="left:1787px;top:137.5px;" width="112" height="400" viewBox="0 0 112 400"><g opacity="0.42"><rect x="0.00" y="0.0" width="12.60" height="1.3" fill="#ce9178"/><rect x="12.60" y="0.0" width="1.05" height="1.3" fill="#d4d4d4"/><rect x="0.00" y="4.0" width="6.30" height="1.3" fill="#c586c0"/><rect x="7.35" y="4.0" width="1.05" height="1.3" fill="#d4d4d4"/><rect x="9.45" y="4.0" width="11.55" height="1.3" fill="#9cdcfe"/><rect x="22.05" y="4.0" width="1.05" height="1.3" fill="#d4d4d4"/><rect x="24.15" y="4.0" width="4.20" height="1.3" fill="#c586c0"/><rect x="29.40" y="4.0" width="27.30" height="1.3" fill="#ce9178"/><rect x="56.70" y="4.0" width="1.05" height="1.3" fill="#d4d4d4"/><rect x="0.00" y="6.0" width="6.30" height="1.3" fill="#c586c0"/><rect x="7.35" y="6.0" width="1.05" height="1.3" fill="#d4d4d4"/><rect x="9.45" y="6.0" width="6.30" height="1.3" fill="#9cdcfe"/><rect x="16.80" y="6.0" width="1.05" height="1.3" fill="#d4d4d4"/><rect x="18.90" y="6.0" width="4.20" height="1.3" fill="#c586c0"/><rect x="24.15" y="6.0" width="25.20" height="1.3" fill="#ce9178"/><rect x="49.35" y="6.0" width="1.05" height="1.3" fill="#d4d4d4"/><rect x="0.00" y="8.0" width="6.30" height="1.3" fill="#c586c0"/><rect x="7.35" y="8.0" width="1.05" height="1.3" fill="#d4d4d4"/><rect x="9.45" y="8.0" width="9.45" height="1.3" fill="#9cdcfe"/><rect x="19.95" y="8.0" width="1.05" height="1.3" fill="#d4d4d4"/><rect x="22.05" y="8.0" width="4.20" height="1.3" fill="#c586c0"/><rect x="27.30" y="8.0" width="28.35" height="1.3" fill="#ce9178"/><rect x="55.65" y="8.0" width="1.05" height="1.3" fill="#d4d4d4"/><rect x="0.00" y="10.0" width="6.30" height="1.3" fill="#c586c0"/><rect x="7.35" y="10.0" width="1.05" height="1.3" fill="#d4d4d4"/><rect x="9.45" y="10.0" width="6.30" height="1.3" fill="#9cdcfe"/><rect x="16.80" y="10.0" width="1.05" height="1.3" fill="#d4d4d4"/><rect x="18.90" y="10.0" width="4.20" height="1.3" fill="#c586c0"/><rect x="24.15" y="10.0" width="25.20" height="1.3" fill="#ce9178"/><rect x="49.35" y="10.0" width="1.05" height="1.3" fill="#d4d4d4"/><rect x="0.00" y="12.0" width="6.30" height="1.3" fill="#c586c0"/><rect x="7.35" y="12.0" width="1.05" height="1.3" fill="#d4d4d4"/><rect x="9.45" y="12.0" width="8.40" height="1.3" fill="#9cdcfe"/><rect x="18.90" y="12.0" width="1.05" height="1.3" fill="#d4d4d4"/><rect x="21.00" y="12.0" width="4.20" height="1.3" fill="#c586c0"/><rect x="26.25" y="12.0" width="28.35" height="1.3" fill="#ce9178"/><rect x="54.60" y="12.0" width="1.05" height="1.3" fill="#d4d4d4"/><rect x="0.00" y="14.0" width="6.30" height="1.3" fill="#c586c0"/><rect x="7.35" y="14.0" width="1.05" height="1.3" fill="#d4d4d4"/><rect x="9.45" y="14.0" width="7.35" height="1.3" fill="#9cdcfe"/><rect x="17.85" y="14.0" width="1.05" height="1.3" fill="#d4d4d4"/><rect x="19.95" y="14.0" width="4.20" height="1.3" fill="#c586c0"/><rect x="25.20" y="14.0" width="14.70" height="1.3" fill="#ce9178"/><rect x="39.90" y="14.0" width="1.05" height="1.3" fill="#d4d4d4"/><rect x="0.00" y="16.0" width="6.30" height="1.3" fill="#c586c0"/><rect x="7.35" y="16.0" width="1.05" height="1.3" fill="#d4d4d4"/><rect x="9.45" y="16.0" width="11.55" height="1.3" fill="#9cdcfe"/><rect x="22.05" y="16.0" width="1.05" height="1.3" fill="#d4d4d4"/><rect x="24.15" y="16.0" width="4.20" height="1.3" fill="#c586c0"/><rect x="29.40" y="16.0" width="22.05" height="1.3" fill="#ce9178"/><rect x="51.45" y="16.0" width="1.05" height="1.3" fill="#d4d4d4"/><rect x="0.00" y="18.0" width="6.30" height="1.3" fill="#c586c0"/><rect x="7.35" y="18.0" width="1.05" height="1.3" fill="#d4d4d4"/><rect x="9.45" y="18.0" width="11.55" height="1.3" fill="#9cdcfe"/><rect x="22.05" y="18.0" width="1.05" height="1.3" fill="#d4d4d4"/><rect x="24.15" y="18.0" width="4.20" height="1.3" fill="#c586c0"/><rect x="29.40" y="18.0" width="26.25" height="1.3" fill="#ce9178"/><rect x="55.65" y="18.0" width="1.05" height="1.3" fill="#d4d4d4"/><rect x="0.00" y="20.0" width="6.30" height="1.3" fill="#c586c0"/><rect x="7.35" y="20.0" width="5.25" height="1.3" fill="#9cdcfe"/><rect x="12.60" y="20.0" width="1.05" height="1.3" fill="#d4d4d4"/><rect x="14.70" y="20.0" width="1.05" height="1.3" fill="#d4d4d4"/><rect x="16.80" y="20.0" width="10.50" height="1.3" fill="#9cdcfe"/><rect x="28.35" y="20.0" width="1.05" height="1.3" fill="#d4d4d4"/><rect x="30.45" y="20.0" width="4.20" height="1.3" fill="#c586c0"/><rect x="35.70" y="20.0" width="7.35" height="1.3" fill="#ce9178"/><rect x="43.05" y="20.0" width="1.05" height="1.3" fill="#d4d4d4"/><rect x="0.00" y="22.0" width="6.30" height="1.3" fill="#c586c0"/><rect x="7.35" y="22.0" width="1.05" height="1.3" fill="#d4d4d4"/><rect x="9.45" y="22.0" width="7.35" height="1.3" fill="#9cdcfe"/><rect x="16.80" y="22.0" width="1.05" height="1.3" fill="#d4d4d4"/><rect x="18.90" y="22.0" width="10.50" height="1.3" fill="#9cdcfe"/><rect x="30.45" y="22.0" width="1.05" height="1.3" fill="#d4d4d4"/><rect x="32.55" y="22.0" width="4.20" height="1.3" fill="#c586c0"/><rect x="37.80" y="22.0" width="14.70" height="1.3" fill="#ce9178"/><rect x="52.50" y="22.0" width="1.05" height="1.3" fill="#d4d4d4"/><rect x="0.00" y="24.0" width="6.30" height="1.3" fill="#c586c0"/><rect x="7.35" y="24.0" width="1.05" height="1.3" fill="#d4d4d4"/><rect x="9.45" y="24.0" width="4.20" height="1.3" fill="#9cdcfe"/><rect x="14.70" y="24.0" width="1.05" height="1.3" fill="#d4d4d4"/><rect x="16.80" y="24.0" width="4.20" height="1.3" fill="#c586c0"/><rect x="22.05" y="24.0" width="11.55" height="1.3" fill="#ce9178"/><rect x="33.60" y="24.0" width="1.05" height="1.3" fill="#d4d4d4"/><rect x="0.00" y="26.0" width="6.30" height="1.3" fill="#c586c0"/><rect x="7.35" y="26.0" width="1.05" height="1.3" fill="#d4d4d4"/><rect x="9.45" y="26.0" width="10.50" height="1.3" fill="#9cdcfe"/><rect x="21.00" y="26.0" width="1.05" height="1.3" fill="#d4d4d4"/><rect x="23.10" y="26.0" width="4.20" height="1.3" fill="#c586c0"/><rect x="28.35" y="26.0" width="17.85" height="1.3" fill="#ce9178"/><rect x="46.20" y="26.0" width="1.05" height="1.3" fill="#d4d4d4"/><rect x="0.00" y="28.0" width="6.30" height="1.3" fill="#c586c0"/><rect x="7.35" y="28.0" width="5.25" height="1.3" fill="#9cdcfe"/><rect x="12.60" y="28.0" width="1.05" height="1.3" fill="#d4d4d4"/><rect x="14.70" y="28.0" width="1.05" height="1.3" fill="#d4d4d4"/><rect x="16.80" y="28.0" width="11.55" height="1.3" fill="#9cdcfe"/><rect x="28.35" y="28.0" width="1.05" height="1.3" fill="#d4d4d4"/><rect x="30.45" y="28.0" width="9.45" height="1.3" fill="#9cdcfe"/><rect x="39.90" y="28.0" width="1.05" height="1.3" fill="#d4d4d4"/><rect x="42.00" y="28.0" width="8.40" height="1.3" fill="#9cdcfe"/><rect x="51.45" y="28.0" width="1.05" height="1.3" fill="#d4d4d4"/><rect x="53.55" y="28.0" width="4.20" height="1.3" fill="#c586c0"/><rect x="58.80" y="28.0" width="7.35" height="1.3" fill="#ce9178"/><rect x="66.15" y="28.0" width="1.05" height="1.3" fill="#d4d4d4"/><rect x="0.00" y="30.0" width="6.30" height="1.3" fill="#c586c0"/><rect x="7.35" y="30.0" width="1.05" height="1.3" fill="#d4d4d4"/><rect x="9.45" y="30.0" width="7.35" height="1.3" fill="#9cdcfe"/><rect x="17.85" y="30.0" width="1.05" height="1.3" fill="#d4d4d4"/><rect x="19.95" y="30.0" width="4.20" height="1.3" fill="#c586c0"/><rect x="25.20" y="30.0" width="17.85" height="1.3" fill="#ce9178"/><rect x="43.05" y="30.0" width="1.05" height="1.3" fill="#d4d4d4"/><rect x="0.00" y="32.0" width="6.30" height="1.3" fill="#c586c0"/><rect x="7.35" y="32.0" width="1.05" height="1.3" fill="#d4d4d4"/><rect x="9.45" y="32.0" width="19.95" height="1.3" fill="#9cdcfe"/><rect x="30.45" y="32.0" width="1.05" height="1.3" fill="#d4d4d4"/><rect x="32.55" y="32.0" width="4.20" height="1.3" fill="#c586c0"/><rect x="37.80" y="32.0" width="32.55" height="1.3" fill="#ce9178"/><rect x="70.35" y="32.0" width="1.05" height="1.3" fill="#d4d4d4"/><rect x="0.00" y="36.0" width="8.40" height="1.3" fill="#569cd6"/><rect x="9.45" y="36.0" width="13.65" height="1.3" fill="#dcdcaa"/><rect x="23.10" y="36.0" width="1.05" height="1.3" fill="#d4d4d4"/><rect x="24.15" y="36.0" width="1.05" height="1.3" fill="#d4d4d4"/><rect x="26.25" y="36.0" width="1.05" height="1.3" fill="#d4d4d4"/><rect x="2.10" y="38.0" width="5.25" height="1.3" fill="#569cd6"/><rect x="8.40" y="38.0" width="1.05" height="1.3" fill="#d4d4d4"/><rect x="9.45" y="38.0" width="8.40" height="1.3" fill="#9cdcfe"/><rect x="17.85" y="38.0" width="1.05" height="1.3" fill="#d4d4d4"/><rect x="19.95" y="38.0" width="11.55" height="1.3" fill="#9cdcfe"/><rect x="31.50" y="38.0" width="1.05" height="1.3" fill="#d4d4d4"/><rect x="33.60" y="38.0" width="1.05" height="1.3" fill="#d4d4d4"/><rect x="35.70" y="38.0" width="8.40" height="1.3" fill="#9cdcfe"/><rect x="44.10" y="38.0" width="1.05" height="1.3" fill="#d4d4d4"/><rect x="45.15" y="38.0" width="7.35" height="1.3" fill="#4ec9b0"/><rect x="52.50" y="38.0" width="1.05" height="1.3" fill="#d4d4d4"/><rect x="53.55" y="38.0" width="1.05" height="1.3" fill="#d4d4d4"/><rect x="54.60" y="38.0" width="1.05" height="1.3" fill="#d4d4d4"/><rect x="55.65" y="38.0" width="1.05" height="1.3" fill="#d4d4d4"/><rect x="56.70" y="38.0" width="1.05" height="1.3" fill="#d4d4d4"/><rect x="57.75" y="38.0" width="1.05" height="1.3" fill="#d4d4d4"/><rect x="58.80" y="38.0" width="1.05" height="1.3" fill="#d4d4d4"/><rect x="59.85" y="38.0" width="1.05" height="1.3" fill="#d4d4d4"/><rect x="2.10" y="40.0" width="5.25" height="1.3" fill="#569cd6"/><rect x="8.40" y="40.0" width="1.05" height="1.3" fill="#d4d4d4"/><rect x="9.45" y="40.0" width="9.45" height="1.3" fill="#9cdcfe"/><rect x="18.90" y="40.0" width="1.05" height="1.3" fill="#d4d4d4"/><rect x="21.00" y="40.0" width="12.60" height="1.3" fill="#9cdcfe"/><rect x="33.60" y="40.0" width="1.05" height="1.3" fill="#d4d4d4"/><rect x="35.70" y="40.0" width="1.05" height="1.3" fill="#d4d4d4"/><rect x="37.80" y="40.0" width="8.40" height="1.3" fill="#dcdcaa"/><rect x="46.20" y="40.0" width="1.05" height="1.3" fill="#d4d4d4"/><rect x="47.25" y="40.0" width="5.25" height="1.3" fill="#569cd6"/><rect x="52.50" y="40.0" width="1.05" height="1.3" fill="#d4d4d4"/><rect x="53.55" y="40.0" width="1.05" height="1.3" fill="#d4d4d4"/><rect x="2.10" y="42.0" width="5.25" height="1.3" fill="#569cd6"/><rect x="8.40" y="42.0" width="1.05" height="1.3" fill="#d4d4d4"/><rect x="9.45" y="42.0" width="15.75" height="1.3" fill="#9cdcfe"/><rect x="25.20" y="42.0" width="1.05" height="1.3" fill="#d4d4d4"/><rect x="27.30" y="42.0" width="18.90" height="1.3" fill="#9cdcfe"/><rect x="46.20" y="42.0" width="1.05" height="1.3" fill="#d4d4d4"/><rect x="48.30" y="42.0" width="1.05" height="1.3" fill="#d4d4d4"/><rect x="50.40" y="42.0" width="8.40" height="1.3" fill="#dcdcaa"/><rect x="58.80" y="42.0" width="1.05" height="1.3" fill="#d4d4d4"/><rect x="59.85" y="42.0" width="5.25" height="1.3" fill="#569cd6"/><rect x="65.10" y="42.0" width="1.05" height="1.3" fill="#d4d4d4"/><rect x="66.15" y="42.0" width="1.05" height="1.3" fill="#d4d4d4"/><rect x="2.10" y="44.0" width="5.25" height="1.3" fill="#569cd6"/><rect x="8.40" y="44.0" width="1.05" height="1.3" fill="#d4d4d4"/><rect x="10.50" y="44.0" width="5.25" height="1.3" fill="#9cdcfe"/><rect x="16.80" y="44.0" width="1.05" height="1.3" fill="#d4d4d4"/><rect x="18.90" y="44.0" width="1.05" height="1.3" fill="#d4d4d4"/><rect x="21.00" y="44.0" width="8.40" height="1.3" fill="#dcdcaa"/><rect x="29.40" y="44.0" width="1.05" height="1.3" fill="#d4d4d4"/><rect x="30.45" y="44.0" width="1.05" height="1.3" fill="#d4d4d4"/><rect x="31.50" y="44.0" width="1.05" height="1.3" fill="#d4d4d4"/><rect x="2.10" y="48.0" width="5.25" height="1.3" fill="#569cd6"/><rect x="8.40" y="48.0" width="19.95" height="1.3" fill="#9cdcfe"/><rect x="29.40" y="48.0" width="1.05" height="1.3" fill="#d4d4d4"/><rect x="31.50" y="48.0" width="1.05" height="1.3" fill="#d4d4d4"/><rect x="32.55" y="48.0" width="9.45" height="1.3" fill="#9cdcfe"/><rect x="42.00" y="48.0" width="1.05" height="1.3" fill="#d4d4d4"/><rect x="44.10" y="48.0" width="6.30" height="1.3" fill="#569cd6"/><rect x="50.40" y="48.0" width="1.05" height="1.3" fill="#d4d4d4"/><rect x="52.50" y="48.0" width="1.05" height="1.3" fill="#d4d4d4"/><rect x="53.55" y="48.0" width="1.05" height="1.3" fill="#d4d4d4"/><rect x="55.65" y="48.0" width="1.05" height="1.3" fill="#d4d4d4"/><rect x="4.20" y="50.0" width="11.55" height="1.3" fill="#dcdcaa"/><rect x="15.75" y="50.0" width="1.05" height="1.3" fill="#d4d4d4"/><rect x="16.80" y="50.0" width="8.40" height="1.3" fill="#9cdcfe"/><rect x="25.20" y="50.0" width="1.05" height="1.3" fill="#d4d4d4"/><rect x="26.25" y="50.0" width="6.30" height="1.3" fill="#dcdcaa"/><rect x="32.55" y="50.0" width="1.05" height="1.3" fill="#d4d4d4"/><rect x="33.60" y="50.0" width="1.05" height="1.3" fill="#d4d4d4"/><rect x="34.65" y="50.0" width="7.35" height="1.3" fill="#9cdcfe"/><rect x="42.00" y="50.0" width="1.05" height="1.3" fill="#d4d4d4"/><rect x="44.10" y="50.0" width="1.05" height="1.3" fill="#d4d4d4"/><rect x="45.15" y="50.0" width="1.05" height="1.3" fill="#d4d4d4"/><rect x="47.25" y="50.0" width="7.35" height="1.3" fill="#9cdcfe"/><rect x="54.60" y="50.0" width="1.05" height="1.3" fill="#d4d4d4"/><rect x="55.65" y="50.0" width="3.15" height="1.3" fill="#9cdcfe"/><rect x="59.85" y="50.0" width="1.05" height="1.3" fill="#d4d4d4"/><rect x="60.90" y="50.0" width="1.05" height="1.3" fill="#d4d4d4"/><rect x="61.95" y="50.0" width="1.05" height="1.3" fill="#d4d4d4"/><rect x="64.05" y="50.0" width="9.45" height="1.3" fill="#9cdcfe"/><rect x="73.50" y="50.0" width="1.05" height="1.3" fill="#d4d4d4"/><rect x="74.55" y="50.0" width="1.05" height="1.3" fill="#d4d4d4"/><rect x="75.60" y="50.0" width="1.05" height="1.3" fill="#d4d4d4"/><rect x="2.10" y="52.0" width="1.05" height="1.3" fill="#d4d4d4"/><rect x="3.15" y="52.0" width="1.05" height="1.3" fill="#d4d4d4"/><rect x="2.10" y="56.0" width="5.25" height="1.3" fill="#569cd6"/><rect x="8.40" y="56.0" width="1.05" height="1.3" fill="#d4d4d4"/><rect x="10.50" y="56.0" width="4.20" height="1.3" fill="#9cdcfe"/><rect x="14.70" y="56.0" width="1.05" height="1.3" fill="#d4d4d4"/><rect x="16.80" y="56.0" width="7.35" height="1.3" fill="#9cdcfe"/><rect x="25.20" y="56.0" width="1.05" height="1.3" fill="#d4d4d4"/><rect x="27.30" y="56.0" width="1.05" height="1.3" fill="#d4d4d4"/><rect x="29.40" y="56.0" width="10.50" height="1.3" fill="#dcdcaa"/><rect x="39.90" y="56.0" width="1.05" height="1.3" fill="#d4d4d4"/><rect x="40.95" y="56.0" width="1.05" height="1.3" fill="#d4d4d4"/><rect x="42.00" y="56.0" width="1.05" height="1.3" fill="#d4d4d4"/><rect x="2.10" y="60.0" width="5.25" height="1.3" fill="#569cd6"/><rect x="8.40" y="60.0" width="4.20" height="1.3" fill="#9cdcfe"/><rect x="13.65" y="60.0" width="1.05" height="1.3" fill="#d4d4d4"/><rect x="15.75" y="60.0" width="7.35" height="1.3" fill="#dcdcaa"/><rect x="23.10" y="60.0" width="1.05" height="1.3" fill="#d4d4d4"/><rect x="24.15" y="60.0" width="1.05" height="1.3" fill="#d4d4d4"/><rect x="4.20" y="62.0" width="8.40" height="1.3" fill="#9cdcfe"/><rect x="12.60" y="62.0" width="1.05" height="1.3" fill="#d4d4d4"/><rect x="14.70" y="62.0" width="11.55" height="1.3" fill="#dcdcaa"/><rect x="26.25" y="62.0" width="1.05" height="1.3" fill="#d4d4d4"/><rect x="27.30" y="62.0" width="19.95" height="1.3" fill="#4ec9b0"/><rect x="47.25" y="62.0" width="1.05" height="1.3" fill="#d4d4d4"/><rect x="48.30" y="62.0" width="1.05" height="1.3" fill="#d4d4d4"/><rect x="2.10" y="64.0" width="1.05" height="1.3" fill="#d4d4d4"/><rect x="3.15" y="64.0" width="1.05" height="1.3" fill="#d4d4d4"/><rect x="4.20" y="64.0" width="1.05" height="1.3" fill="#d4d4d4"/><rect x="2.10" y="68.0" width="5.25" height="1.3" fill="#569cd6"/><rect x="8.40" y="68.0" width="1.05" height="1.3" fill="#d4d4d4"/><rect x="10.50" y="68.0" width="8.40" height="1.3" fill="#9cdcfe"/><rect x="18.90" y="68.0" width="1.05" height="1.3" fill="#d4d4d4"/><rect x="21.00" y="68.0" width="5.25" height="1.3" fill="#9cdcfe"/><rect x="26.25" y="68.0" width="1.05" height="1.3" fill="#d4d4d4"/><rect x="28.35" y="68.0" width="8.40" height="1.3" fill="#9cdcfe"/><rect x="37.80" y="68.0" width="1.05" height="1.3" fill="#d4d4d4"/><rect x="39.90" y="68.0" width="1.05" height="1.3" fill="#d4d4d4"/><rect x="42.00" y="68.0" width="4.20" height="1.3" fill="#9cdcfe"/><rect x="46.20" y="68.0" width="1.05" height="1.3" fill="#d4d4d4"/><rect x="2.10" y="70.0" width="5.25" height="1.3" fill="#569cd6"/><rect x="8.40" y="70.0" width="14.70" height="1.3" fill="#9cdcfe"/><rect x="24.15" y="70.0" width="1.05" height="1.3" fill="#d4d4d4"/><rect x="26.25" y="70.0" width="5.25" height="1.3" fill="#dcdcaa"/><rect x="31.50" y="70.0" width="1.05" height="1.3" fill="#d4d4d4"/><rect x="32.55" y="70.0" width="16.80" height="1.3" fill="#ce9178"/><rect x="49.35" y="70.0" width="1.05" height="1.3" fill="#d4d4d4"/><rect x="50.40" y="70.0" width="1.05" height="1.3" fill="#d4d4d4"/><rect x="2.10" y="74.0" width="5.25" height="1.3" fill="#569cd6"/><rect x="8.40" y="74.0" width="19.95" height="1.3" fill="#9cdcfe"/><rect x="29.40" y="74.0" width="1.05" height="1.3" fill="#d4d4d4"/><rect x="31.50" y="74.0" width="11.55" height="1.3" fill="#dcdcaa"/><rect x="43.05" y="74.0" width="1.05" height="1.3" fill="#d4d4d4"/><rect x="44.10" y="74.0" width="5.25" height="1.3" fill="#569cd6"/><rect x="50.40" y="74.0" width="1.05" height="1.3" fill="#d4d4d4"/><rect x="51.45" y="74.0" width="1.05" height="1.3" fill="#d4d4d4"/><rect x="53.55" y="74.0" width="1.05" height="1.3" fill="#d4d4d4"/><rect x="54.60" y="74.0" width="1.05" height="1.3" fill="#d4d4d4"/><rect x="56.70" y="74.0" width="1.05" height="1.3" fill="#d4d4d4"/><rect x="4.20" y="76.0" width="18.90" height="1.3" fill="#dcdcaa"/><rect x="23.10" y="76.0" width="1.05" height="1.3" fill="#d4d4d4"/><rect x="24.15" y="76.0" width="4.20" height="1.3" fill="#569cd6"/><rect x="28.35" y="76.0" width="1.05" height="1.3" fill="#d4d4d4"/><rect x="29.40" y="76.0" width="1.05" height="1.3" fill="#d4d4d4"/><rect x="4.20" y="78.0" width="3.15" height="1.3" fill="#c586c0"/><rect x="8.40" y="78.0" width="1.05" height="1.3" fill="#d4d4d4"/><rect x="6.30" y="80.0" width="5.25" height="1.3" fill="#569cd6"/><rect x="12.60" y="80.0" width="8.40" height="1.3" fill="#9cdcfe"/><rect x="22.05" y="80.0" width="1.05" height="1.3" fill="#d4d4d4"/><rect x="24.15" y="80.0" width="5.25" height="1.3" fill="#c586c0"/><rect x="30.45" y="80.0" width="5.25" height="1.3" fill="#9cdcfe"/><rect x="35.70" y="80.0" width="1.05" height="1.3" fill="#d4d4d4"/><rect x="36.75" y="80.0" width="3.15" height="1.3" fill="#9cdcfe"/><rect x="39.90" y="80.0" width="1.05" height="1.3" fill="#d4d4d4"/><rect x="40.95" y="80.0" width="11.55" height="1.3" fill="#4ec9b0"/><rect x="52.50" y="80.0" width="1.05" height="1.3" fill="#d4d4d4"/><rect x="53.55" y="80.0" width="1.05" height="1.3" fill="#d4d4d4"/><rect x="54.60" y="80.0" width="23.10" height="1.3" fill="#ce9178"/><rect x="77.70" y="80.0" width="1.05" height="1.3" fill="#d4d4d4"/><rect x="78.75" y="80.0" width="1.05" height="1.3" fill="#d4d4d4"/><rect x="6.30" y="82.0" width="8.40" height="1.3" fill="#dcdcaa"/><rect x="14.70" y="82.0" width="1.05" height="1.3" fill="#d4d4d4"/><rect x="15.75" y="82.0" width="16.80" height="1.3" fill="#ce9178"/><rect x="32.55" y="82.0" width="1.05" height="1.3" fill="#d4d4d4"/><rect x="34.65" y="82.0" width="8.40" height="1.3" fill="#9cdcfe"/><rect x="43.05" y="82.0" width="1.05" height="1.3" fill="#d4d4d4"/><rect x="44.10" y="82.0" width="4.20" height="1.3" fill="#9cdcfe"/><rect x="48.30" y="82.0" width="1.05" height="1.3" fill="#d4d4d4"/><rect x="49.35" y="82.0" width="19.95" height="1.3" fill="#9cdcfe"/><rect x="69.30" y="82.0" width="1.05" height="1.3" fill="#d4d4d4"/><rect x="70.35" y="82.0" width="1.05" height="1.3" fill="#d4d4d4"/><rect x="4.20" y="84.0" width="1.05" height="1.3" fill="#d4d4d4"/><rect x="6.30" y="84.0" width="5.25" height="1.3" fill="#c586c0"/><rect x="12.60" y="84.0" width="1.05" height="1.3" fill="#d4d4d4"/><rect x="13.65" y="84.0" width="5.25" height="1.3" fill="#9cdcfe"/><rect x="18.90" y="84.0" width="1.05" height="1.3" fill="#d4d4d4"/><rect x="21.00" y="84.0" width="1.05" height="1.3" fill="#d4d4d4"/><rect x="6.30" y="86.0" width="5.25" height="1.3" fill="#569cd6"/><rect x="12.60" y="86.0" width="10.50" height="1.3" fill="#9cdcfe"/><rect x="24.15" y="86.0" width="1.05" height="1.3" fill="#d4d4d4"/><rect x="26.25" y="86.0" width="5.25" height="1.3" fill="#9cdcfe"/><rect x="32.55" y="86.0" width="2.10" height="1.3" fill="#c586c0"/><rect x="35.70" y="86.0" width="10.50" height="1.3" fill="#4ec9b0"/><rect x="46.20" y="86.0" width="1.05" height="1.3" fill="#d4d4d4"/><rect x="47.25" y="86.0" width="11.55" height="1.3" fill="#4ec9b0"/><rect x="58.80" y="86.0" width="1.05" height="1.3" fill="#d4d4d4"/><rect x="59.85" y="86.0" width="1.05" height="1.3" fill="#d4d4d4"/><rect x="6.30" y="88.0" width="5.25" height="1.3" fill="#dcdcaa"/><rect x="11.55" y="88.0" width="1.05" height="1.3" fill="#d4d4d4"/><rect x="12.60" y="88.0" width="1.05" height="1.3" fill="#d4d4d4"/><rect x="8.40" y="90.0" width="5.25" height="1.3" fill="#9cdcfe"/><rect x="13.65" y="90.0" width="1.05" height="1.3" fill="#d4d4d4"/><rect x="15.75" y="90.0" width="7.35" height="1.3" fill="#ce9178"/><rect x="23.10" y="90.0" width="1.05" height="1.3" fill="#d4d4d4"/><rect x="8.40" y="92.0" width="11.55" height="1.3" fill="#9cdcfe"/><rect x="19.95" y="92.0" width="1.05" height="1.3" fill="#d4d4d4"/><rect x="10.50" y="94.0" width="10.50" height="1.3" fill="#9cdcfe"/><rect x="21.00" y="94.0" width="1.05" height="1.3" fill="#d4d4d4"/><rect x="22.05" y="94.0" width="8.40" height="1.3" fill="#9cdcfe"/><rect x="30.45" y="94.0" width="1.05" height="1.3" fill="#d4d4d4"/><rect x="31.50" y="94.0" width="1.05" height="1.3" fill="#d4d4d4"/><rect x="32.55" y="94.0" width="4.20" height="1.3" fill="#9cdcfe"/><rect x="36.75" y="94.0" width="1.05" height="1.3" fill="#d4d4d4"/><rect x="37.80" y="94.0" width="7.35" height="1.3" fill="#9cdcfe"/><rect x="46.20" y="94.0" width="1.05" height="1.3" fill="#d4d4d4"/><rect x="47.25" y="94.0" width="1.05" height="1.3" fill="#d4d4d4"/><rect x="10.50" y="96.0" width="35.70" height="1.3" fill="#ce9178"/><rect x="46.20" y="96.0" width="1.05" height="1.3" fill="#d4d4d4"/><rect x="8.40" y="98.0" width="7.35" height="1.3" fill="#9cdcfe"/><rect x="15.75" y="98.0" width="1.05" height="1.3" fill="#d4d4d4"/><rect x="17.85" y="98.0" width="13.65" height="1.3" fill="#ce9178"/><rect x="31.50" y="98.0" width="1.05" height="1.3" fill="#d4d4d4"/><rect x="6.30" y="100.0" width="1.05" height="1.3" fill="#d4d4d4"/><rect x="7.35" y="100.0" width="1.05" height="1.3" fill="#d4d4d4"/><rect x="8.40" y="100.0" width="1.05" height="1.3" fill="#d4d4d4"/><rect x="4.20" y="102.0" width="1.05" height="1.3" fill="#d4d4d4"/><rect x="6.30" y="102.0" width="7.35" height="1.3" fill="#c586c0"/><rect x="14.70" y="102.0" width="1.05" height="1.3" fill="#d4d4d4"/><rect x="6.30" y="104.0" width="18.90" height="1.3" fill="#dcdcaa"/><rect x="25.20" y="104.0" width="1.05" height="1.3" fill="#d4d4d4"/><rect x="26.25" y="104.0" width="5.25" height="1.3" fill="#569cd6"/><rect x="31.50" y="104.0" width="1.05" height="1.3" fill="#d4d4d4"/><rect x="32.55" y="104.0" width="1.05" height="1.3" fill="#d4d4d4"/><rect x="4.20" y="106.0" width="1.05" height="1.3" fill="#d4d4d4"/><rect x="2.10" y="108.0" width="1.05" height="1.3" fill="#d4d4d4"/><rect x="3.15" y="108.0" width="1.05" height="1.3" fill="#d4d4d4"/><rect x="5.25" y="108.0" width="1.05" height="1.3" fill="#d4d4d4"/><rect x="6.30" y="108.0" width="8.40" height="1.3" fill="#9cdcfe"/><rect x="14.70" y="108.0" width="1.05" height="1.3" fill="#d4d4d4"/><rect x="16.80" y="108.0" width="5.25" height="1.3" fill="#9cdcfe"/><rect x="22.05" y="108.0" width="1.05" height="1.3" fill="#d4d4d4"/><rect x="23.10" y="108.0" width="1.05" height="1.3" fill="#d4d4d4"/><rect x="24.15" y="108.0" width="1.05" height="1.3" fill="#d4d4d4"/><rect x="2.10" y="112.0" width="5.25" height="1.3" fill="#569cd6"/><rect x="8.40" y="112.0" width="13.65" height="1.3" fill="#9cdcfe"/><rect x="23.10" y="112.0" width="1.05" height="1.3" fill="#d4d4d4"/><rect x="25.20" y="112.0" width="11.55" height="1.3" fill="#dcdcaa"/><rect x="36.75" y="112.0" width="1.05" height="1.3" fill="#d4d4d4"/><rect x="4.20" y="114.0" width="5.25" height="1.3" fill="#569cd6"/><rect x="10.50" y="114.0" width="1.05" height="1.3" fill="#d4d4d4"/><rect x="11.55" y="114.0" width="7.35" height="1.3" fill="#9cdcfe"/><rect x="18.90" y="114.0" width="1.05" height="1.3" fill="#d4d4d4"/><rect x="21.00" y="114.0" width="7.35" height="1.3" fill="#569cd6"/><rect x="29.40" y="114.0" width="1.05" height="1.3" fill="#d4d4d4"/><rect x="31.50" y="114.0" width="5.25" height="1.3" fill="#569cd6"/><rect x="36.75" y="114.0" width="1.05" height="1.3" fill="#d4d4d4"/><rect x="38.85" y="114.0" width="1.05" height="1.3" fill="#d4d4d4"/><rect x="39.90" y="114.0" width="1.05" height="1.3" fill="#d4d4d4"/><rect x="42.00" y="114.0" width="1.05" height="1.3" fill="#d4d4d4"/><rect x="6.30" y="116.0" width="12.60" height="1.3" fill="#dcdcaa"/><rect x="18.90" y="116.0" width="1.05" height="1.3" fill="#d4d4d4"/><rect x="19.95" y="116.0" width="4.20" height="1.3" fill="#569cd6"/><rect x="24.15" y="116.0" width="1.05" height="1.3" fill="#d4d4d4"/><rect x="25.20" y="116.0" width="1.05" height="1.3" fill="#d4d4d4"/><rect x="6.30" y="118.0" width="18.90" height="1.3" fill="#dcdcaa"/><rect x="25.20" y="118.0" width="1.05" height="1.3" fill="#d4d4d4"/><rect x="26.25" y="118.0" width="5.25" height="1.3" fill="#569cd6"/><rect x="31.50" y="118.0" width="1.05" height="1.3" fill="#d4d4d4"/><rect x="32.55" y="118.0" width="1.05" height="1.3" fill="#d4d4d4"/><rect x="6.30" y="120.0" width="3.15" height="1.3" fill="#c586c0"/><rect x="10.50" y="120.0" width="1.05" height="1.3" fill="#d4d4d4"/><rect x="8.40" y="122.0" width="5.25" height="1.3" fill="#569cd6"/><rect x="14.70" y="122.0" width="8.40" height="1.3" fill="#9cdcfe"/><rect x="24.15" y="122.0" width="1.05" height="1.3" fill="#d4d4d4"/><rect x="26.25" y="122.0" width="5.25" height="1.3" fill="#c586c0"/><rect x="32.55" y="122.0" width="5.25" height="1.3" fill="#9cdcfe"/><rect x="37.80" y="122.0" width="1.05" height="1.3" fill="#d4d4d4"/><rect x="38.85" y="122.0" width="3.15" height="1.3" fill="#9cdcfe"/><rect x="42.00" y="122.0" width="1.05" height="1.3" fill="#d4d4d4"/><rect x="43.05" y="122.0" width="11.55" height="1.3" fill="#4ec9b0"/><rect x="54.60" y="122.0" width="1.05" height="1.3" fill="#d4d4d4"/><rect x="55.65" y="122.0" width="1.05" height="1.3" fill="#d4d4d4"/><rect x="56.70" y="122.0" width="19.95" height="1.3" fill="#ce9178"/><rect x="76.65" y="122.0" width="1.05" height="1.3" fill="#d4d4d4"/><rect x="77.70" y="122.0" width="1.05" height="1.3" fill="#d4d4d4"/><rect x="8.40" y="124.0" width="11.55" height="1.3" fill="#dcdcaa"/><rect x="19.95" y="124.0" width="1.05" height="1.3" fill="#d4d4d4"/><rect x="21.00" y="124.0" width="8.40" height="1.3" fill="#9cdcfe"/><rect x="29.40" y="124.0" width="1.05" height="1.3" fill="#d4d4d4"/><rect x="30.45" y="124.0" width="4.20" height="1.3" fill="#9cdcfe"/><rect x="34.65" y="124.0" width="1.05" height="1.3" fill="#d4d4d4"/><rect x="35.70" y="124.0" width="8.40" height="1.3" fill="#9cdcfe"/><rect x="45.15" y="124.0" width="1.05" height="1.3" fill="#d4d4d4"/><rect x="46.20" y="124.0" width="1.05" height="1.3" fill="#d4d4d4"/><rect x="48.30" y="124.0" width="1.05" height="1.3" fill="#d4d4d4"/><rect x="49.35" y="124.0" width="1.05" height="1.3" fill="#d4d4d4"/><rect x="50.40" y="124.0" width="1.05" height="1.3" fill="#d4d4d4"/><rect x="51.45" y="124.0" width="1.05" height="1.3" fill="#d4d4d4"/><rect x="8.40" y="126.0" width="2.10" height="1.3" fill="#c586c0"/><rect x="11.55" y="126.0" width="1.05" height="1.3" fill="#d4d4d4"/><rect x="12.60" y="126.0" width="7.35" height="1.3" fill="#9cdcfe"/><rect x="19.95" y="126.0" width="1.05" height="1.3" fill="#d4d4d4"/><rect x="22.05" y="126.0" width="1.05" height="1.3" fill="#d4d4d4"/><rect x="10.50" y="128.0" width="5.25" height="1.3" fill="#dcdcaa"/><rect x="15.75" y="128.0" width="1.05" height="1.3" fill="#d4d4d4"/><rect x="16.80" y="128.0" width="1.05" height="1.3" fill="#d4d4d4"/><rect x="12.60" y="130.0" width="5.25" height="1.3" fill="#9cdcfe"/><rect x="17.85" y="130.0" width="1.05" height="1.3" fill="#d4d4d4"/><rect x="19.95" y="130.0" width="21.00" height="1.3" fill="#ce9178"/><rect x="40.95" y="130.0" width="1.05" height="1.3" fill="#d4d4d4"/><rect x="12.60" y="132.0" width="11.55" height="1.3" fill="#9cdcfe"/><rect x="24.15" y="132.0" width="1.05" height="1.3" fill="#d4d4d4"/><rect x="26.25" y="132.0" width="26.25" height="1.3" fill="#ce9178"/><rect x="52.50" y="132.0" width="1.05" height="1.3" fill="#d4d4d4"/><rect x="10.50" y="134.0" width="1.05" height="1.3" fill="#d4d4d4"/><rect x="11.55" y="134.0" width="1.05" height="1.3" fill="#d4d4d4"/><rect x="12.60" y="134.0" width="1.05" height="1.3" fill="#d4d4d4"/><rect x="8.40" y="136.0" width="1.05" height="1.3" fill="#d4d4d4"/><rect x="6.30" y="138.0" width="1.05" height="1.3" fill="#d4d4d4"/><rect x="8.40" y="138.0" width="5.25" height="1.3" fill="#c586c0"/><rect x="14.70" y="138.0" width="1.05" height="1.3" fill="#d4d4d4"/><rect x="15.75" y="138.0" width="5.25" height="1.3" fill="#9cdcfe"/><rect x="21.00" y="138.0" width="1.05" height="1.3" fill="#d4d4d4"/><rect x="23.10" y="138.0" width="1.05" height="1.3" fill="#d4d4d4"/><rect x="8.40" y="140.0" width="5.25" height="1.3" fill="#569cd6"/><rect x="14.70" y="140.0" width="10.50" height="1.3" fill="#9cdcfe"/><rect x="26.25" y="140.0" width="1.05" height="1.3" fill="#d4d4d4"/><rect x="28.35" y="140.0" width="5.25" height="1.3" fill="#9cdcfe"/><rect x="34.65" y="140.0" width="2.10" height="1.3" fill="#c586c0"/><rect x="37.80" y="140.0" width="10.50" height="1.3" fill="#4ec9b0"/><rect x="48.30" y="140.0" width="1.05" height="1.3" fill="#d4d4d4"/><rect x="49.35" y="140.0" width="11.55" height="1.3" fill="#4ec9b0"/><rect x="60.90" y="140.0" width="1.05" height="1.3" fill="#d4d4d4"/><rect x="61.95" y="140.0" width="1.05" height="1.3" fill="#d4d4d4"/><rect x="8.40" y="142.0" width="5.25" height="1.3" fill="#dcdcaa"/><rect x="13.65" y="142.0" width="1.05" height="1.3" fill="#d4d4d4"/><rect x="14.70" y="142.0" width="1.05" height="1.3" fill="#d4d4d4"/><rect x="10.50" y="144.0" width="5.25" height="1.3" fill="#9cdcfe"/><rect x="15.75" y="144.0" width="1.05" height="1.3" fill="#d4d4d4"/><rect x="17.85" y="144.0" width="7.35" height="1.3" fill="#ce9178"/><rect x="25.20" y="144.0" width="1.05" height="1.3" fill="#d4d4d4"/><rect x="10.50" y="146.0" width="11.55" height="1.3" fill="#9cdcfe"/><rect x="22.05" y="146.0" width="1.05" height="1.3" fill="#d4d4d4"/><rect x="12.60" y="148.0" width="10.50" height="1.3" fill="#9cdcfe"/><rect x="23.10" y="148.0" width="1.05" height="1.3" fill="#d4d4d4"/><rect x="24.15" y="148.0" width="8.40" height="1.3" fill="#9cdcfe"/><rect x="32.55" y="148.0" width="1.05" height="1.3" fill="#d4d4d4"/><rect x="33.60" y="148.0" width="1.05" height="1.3" fill="#d4d4d4"/><rect x="34.65" y="148.0" width="4.20" height="1.3" fill="#9cdcfe"/><rect x="38.85" y="148.0" width="1.05" height="1.3" fill="#d4d4d4"/><rect x="39.90" y="148.0" width="7.35" height="1.3" fill="#9cdcfe"/><rect x="48.30" y="148.0" width="1.05" height="1.3" fill="#d4d4d4"/><rect x="49.35" y="148.0" width="1.05" height="1.3" fill="#d4d4d4"/><rect x="51.45" y="148.0" width="27.30" height="1.3" fill="#ce9178"/><rect x="78.75" y="148.0" width="1.05" height="1.3" fill="#d4d4d4"/><rect x="10.50" y="150.0" width="7.35" height="1.3" fill="#9cdcfe"/><rect x="17.85" y="150.0" width="1.05" height="1.3" fill="#d4d4d4"/><rect x="19.95" y="150.0" width="13.65" height="1.3" fill="#ce9178"/><rect x="33.60" y="150.0" width="1.05" height="1.3" fill="#d4d4d4"/><rect x="8.40" y="152.0" width="1.05" height="1.3" fill="#d4d4d4"/><rect x="9.45" y="152.0" width="1.05" height="1.3" fill="#d4d4d4"/><rect x="10.50" y="152.0" width="1.05" height="1.3" fill="#d4d4d4"/><rect x="6.30" y="154.0" width="1.05" height="1.3" fill="#d4d4d4"/><rect x="8.40" y="154.0" width="7.35" height="1.3" fill="#c586c0"/><rect x="16.80" y="154.0" width="1.05" height="1.3" fill="#d4d4d4"/><rect x="8.40" y="156.0" width="12.60" height="1.3" fill="#dcdcaa"/><rect x="21.00" y="156.0" width="1.05" height="1.3" fill="#d4d4d4"/><rect x="22.05" y="156.0" width="5.25" height="1.3" fill="#569cd6"/><rect x="27.30" y="156.0" width="1.05" height="1.3" fill="#d4d4d4"/><rect x="28.35" y="156.0" width="1.05" height="1.3" fill="#d4d4d4"/><rect x="8.40" y="158.0" width="18.90" height="1.3" fill="#dcdcaa"/><rect x="27.30" y="158.0" width="1.05" height="1.3" fill="#d4d4d4"/><rect x="28.35" y="158.0" width="5.25" height="1.3" fill="#569cd6"/><rect x="33.60" y="158.0" width="1.05" height="1.3" fill="#d4d4d4"/><rect x="34.65" y="158.0" width="1.05" height="1.3" fill="#d4d4d4"/><rect x="6.30" y="160.0" width="1.05" height="1.3" fill="#d4d4d4"/><rect x="4.20" y="162.0" width="1.05" height="1.3" fill="#d4d4d4"/><rect x="5.25" y="162.0" width="1.05" height="1.3" fill="#d4d4d4"/><rect x="4.20" y="164.0" width="1.05" height="1.3" fill="#d4d4d4"/><rect x="5.25" y="164.0" width="12.60" height="1.3" fill="#9cdcfe"/><rect x="17.85" y="164.0" width="1.05" height="1.3" fill="#d4d4d4"/><rect x="19.95" y="164.0" width="11.55" height="1.3" fill="#9cdcfe"/><rect x="31.50" y="164.0" width="1.05" height="1.3" fill="#d4d4d4"/><rect x="33.60" y="164.0" width="5.25" height="1.3" fill="#9cdcfe"/><rect x="38.85" y="164.0" width="1.05" height="1.3" fill="#d4d4d4"/><rect x="2.10" y="166.0" width="1.05" height="1.3" fill="#d4d4d4"/><rect x="3.15" y="166.0" width="1.05" height="1.3" fill="#d4d4d4"/><rect x="2.10" y="170.0" width="39.90" height="1.3" fill="#6a9955"/><rect x="2.10" y="172.0" width="9.45" height="1.3" fill="#dcdcaa"/><rect x="11.55" y="172.0" width="1.05" height="1.3" fill="#d4d4d4"/><rect x="12.60" y="172.0" width="1.05" height="1.3" fill="#d4d4d4"/><rect x="13.65" y="172.0" width="1.05" height="1.3" fill="#d4d4d4"/><rect x="15.75" y="172.0" width="1.05" height="1.3" fill="#d4d4d4"/><rect x="16.80" y="172.0" width="1.05" height="1.3" fill="#d4d4d4"/><rect x="18.90" y="172.0" width="1.05" height="1.3" fill="#d4d4d4"/><rect x="4.20" y="174.0" width="2.10" height="1.3" fill="#c586c0"/><rect x="7.35" y="174.0" width="1.05" height="1.3" fill="#d4d4d4"/><rect x="8.40" y="174.0" width="1.05" height="1.3" fill="#d4d4d4"/><rect x="9.45" y="174.0" width="7.35" height="1.3" fill="#9cdcfe"/><rect x="17.85" y="174.0" width="1.05" height="1.3" fill="#d4d4d4"/><rect x="18.90" y="174.0" width="1.05" height="1.3" fill="#d4d4d4"/><rect x="21.00" y="174.0" width="1.05" height="1.3" fill="#d4d4d4"/><rect x="22.05" y="174.0" width="7.35" height="1.3" fill="#9cdcfe"/><rect x="29.40" y="174.0" width="1.05" height="1.3" fill="#d4d4d4"/><rect x="30.45" y="174.0" width="4.20" height="1.3" fill="#9cdcfe"/><rect x="34.65" y="174.0" width="1.05" height="1.3" fill="#d4d4d4"/><rect x="36.75" y="174.0" width="6.30" height="1.3" fill="#c586c0"/><rect x="43.05" y="174.0" width="1.05" height="1.3" fill="#d4d4d4"/><rect x="4.20" y="178.0" width="13.65" height="1.3" fill="#dcdcaa"/><rect x="17.85" y="178.0" width="1.05" height="1.3" fill="#d4d4d4"/><rect x="18.90" y="178.0" width="1.05" height="1.3" fill="#d4d4d4"/><rect x="19.95" y="178.0" width="1.05" height="1.3" fill="#d4d4d4"/><rect x="4.20" y="182.0" width="19.95" height="1.3" fill="#dcdcaa"/><rect x="24.15" y="182.0" width="1.05" height="1.3" fill="#d4d4d4"/><rect x="25.20" y="182.0" width="1.05" height="1.3" fill="#d4d4d4"/><rect x="26.25" y="182.0" width="1.05" height="1.3" fill="#d4d4d4"/><rect x="2.10" y="184.0" width="1.05" height="1.3" fill="#d4d4d4"/><rect x="3.15" y="184.0" width="1.05" height="1.3" fill="#d4d4d4"/><rect x="5.25" y="184.0" width="1.05" height="1.3" fill="#d4d4d4"/><rect x="6.30" y="184.0" width="7.35" height="1.3" fill="#9cdcfe"/><rect x="13.65" y="184.0" width="1.05" height="1.3" fill="#d4d4d4"/><rect x="15.75" y="184.0" width="8.40" height="1.3" fill="#9cdcfe"/><rect x="24.15" y="184.0" width="1.05" height="1.3" fill="#d4d4d4"/><rect x="26.25" y="184.0" width="5.25" height="1.3" fill="#9cdcfe"/><rect x="31.50" y="184.0" width="1.05" height="1.3" fill="#d4d4d4"/><rect x="33.60" y="184.0" width="19.95" height="1.3" fill="#9cdcfe"/><rect x="53.55" y="184.0" width="1.05" height="1.3" fill="#d4d4d4"/><rect x="55.65" y="184.0" width="13.65" height="1.3" fill="#9cdcfe"/><rect x="69.30" y="184.0" width="1.05" height="1.3" fill="#d4d4d4"/><rect x="70.35" y="184.0" width="1.05" height="1.3" fill="#d4d4d4"/><rect x="71.40" y="184.0" width="1.05" height="1.3" fill="#d4d4d4"/><rect x="2.10" y="188.0" width="24.15" height="1.3" fill="#6a9955"/><rect x="2.10" y="190.0" width="5.25" height="1.3" fill="#569cd6"/><rect x="8.40" y="190.0" width="18.90" height="1.3" fill="#9cdcfe"/><rect x="28.35" y="190.0" width="1.05" height="1.3" fill="#d4d4d4"/><rect x="30.45" y="190.0" width="5.25" height="1.3" fill="#569cd6"/><rect x="36.75" y="190.0" width="1.05" height="1.3" fill="#d4d4d4"/><rect x="37.80" y="190.0" width="1.05" height="1.3" fill="#d4d4d4"/><rect x="39.90" y="190.0" width="1.05" height="1.3" fill="#d4d4d4"/><rect x="40.95" y="190.0" width="1.05" height="1.3" fill="#d4d4d4"/><rect x="43.05" y="190.0" width="1.05" height="1.3" fill="#d4d4d4"/><rect x="4.20" y="192.0" width="3.15" height="1.3" fill="#c586c0"/><rect x="8.40" y="192.0" width="1.05" height="1.3" fill="#d4d4d4"/><rect x="6.30" y="194.0" width="5.25" height="1.3" fill="#569cd6"/><rect x="12.60" y="194.0" width="8.40" height="1.3" fill="#9cdcfe"/><rect x="22.05" y="194.0" width="1.05" height="1.3" fill="#d4d4d4"/><rect x="24.15" y="194.0" width="5.25" height="1.3" fill="#c586c0"/><rect x="30.45" y="194.0" width="5.25" height="1.3" fill="#9cdcfe"/><rect x="35.70" y="194.0" width="1.05" height="1.3" fill="#d4d4d4"/><rect x="36.75" y="194.0" width="4.20" height="1.3" fill="#9cdcfe"/><rect x="40.95" y="194.0" width="1.05" height="1.3" fill="#d4d4d4"/><rect x="42.00" y="194.0" width="11.55" height="1.3" fill="#4ec9b0"/><rect x="53.55" y="194.0" width="1.05" height="1.3" fill="#d4d4d4"/><rect x="54.60" y="194.0" width="1.05" height="1.3" fill="#d4d4d4"/><rect x="55.65" y="194.0" width="23.10" height="1.3" fill="#ce9178"/><rect x="78.75" y="194.0" width="1.05" height="1.3" fill="#d4d4d4"/><rect x="80.85" y="194.0" width="1.05" height="1.3" fill="#d4d4d4"/><rect x="8.40" y="196.0" width="14.70" height="1.3" fill="#9cdcfe"/><rect x="23.10" y="196.0" width="1.05" height="1.3" fill="#d4d4d4"/><rect x="25.20" y="196.0" width="1.05" height="1.3" fill="#d4d4d4"/><rect x="26.25" y="196.0" width="14.70" height="1.3" fill="#9cdcfe"/><rect x="40.95" y="196.0" width="1.05" height="1.3" fill="#d4d4d4"/><rect x="6.30" y="198.0" width="1.05" height="1.3" fill="#d4d4d4"/><rect x="7.35" y="198.0" width="1.05" height="1.3" fill="#d4d4d4"/><rect x="8.40" y="198.0" width="1.05" height="1.3" fill="#d4d4d4"/><rect x="6.30" y="200.0" width="8.40" height="1.3" fill="#dcdcaa"/><rect x="14.70" y="200.0" width="1.05" height="1.3" fill="#d4d4d4"/><rect x="15.75" y="200.0" width="16.80" height="1.3" fill="#ce9178"/><rect x="32.55" y="200.0" width="1.05" height="1.3" fill="#d4d4d4"/><rect x="34.65" y="200.0" width="1.05" height="1.3" fill="#d4d4d4"/><rect x="35.70" y="200.0" width="14.70" height="1.3" fill="#9cdcfe"/><rect x="50.40" y="200.0" width="1.05" height="1.3" fill="#d4d4d4"/><rect x="51.45" y="200.0" width="1.05" height="1.3" fill="#d4d4d4"/><rect x="6.30" y="202.0" width="5.25" height="1.3" fill="#dcdcaa"/><rect x="11.55" y="202.0" width="1.05" height="1.3" fill="#d4d4d4"/><rect x="12.60" y="202.0" width="1.05" height="1.3" fill="#d4d4d4"/><rect x="8.40" y="204.0" width="5.25" height="1.3" fill="#9cdcfe"/><rect x="13.65" y="204.0" width="1.05" height="1.3" fill="#d4d4d4"/><rect x="15.75" y="204.0" width="8.40" height="1.3" fill="#9cdcfe"/><rect x="24.15" y="204.0" width="1.05" height="1.3" fill="#d4d4d4"/><rect x="25.20" y="204.0" width="4.20" height="1.3" fill="#9cdcfe"/><rect x="29.40" y="204.0" width="1.05" height="1.3" fill="#d4d4d4"/><rect x="30.45" y="204.0" width="7.35" height="1.3" fill="#9cdcfe"/><rect x="37.80" y="204.0" width="1.05" height="1.3" fill="#d4d4d4"/><rect x="8.40" y="206.0" width="7.35" height="1.3" fill="#9cdcfe"/><rect x="15.75" y="206.0" width="1.05" height="1.3" fill="#d4d4d4"/><rect x="17.85" y="206.0" width="9.45" height="1.3" fill="#ce9178"/><rect x="27.30" y="206.0" width="1.05" height="1.3" fill="#d4d4d4"/><rect x="6.30" y="208.0" width="1.05" height="1.3" fill="#d4d4d4"/><rect x="7.35" y="208.0" width="1.05" height="1.3" fill="#d4d4d4"/><rect x="8.40" y="208.0" width="1.05" height="1.3" fill="#d4d4d4"/><rect x="4.20" y="210.0" width="1.05" height="1.3" fill="#d4d4d4"/><rect x="6.30" y="210.0" width="5.25" height="1.3" fill="#c586c0"/><rect x="12.60" y="210.0" width="1.05" height="1.3" fill="#d4d4d4"/><rect x="13.65" y="210.0" width="5.25" height="1.3" fill="#9cdcfe"/><rect x="18.90" y="210.0" width="1.05" height="1.3" fill="#d4d4d4"/><rect x="21.00" y="210.0" width="1.05" height="1.3" fill="#d4d4d4"/><rect x="6.30" y="212.0" width="5.25" height="1.3" fill="#569cd6"/><rect x="12.60" y="212.0" width="10.50" height="1.3" fill="#9cdcfe"/><rect x="24.15" y="212.0" width="1.05" height="1.3" fill="#d4d4d4"/><rect x="26.25" y="212.0" width="5.25" height="1.3" fill="#9cdcfe"/><rect x="32.55" y="212.0" width="2.10" height="1.3" fill="#c586c0"/><rect x="35.70" y="212.0" width="10.50" height="1.3" fill="#4ec9b0"/><rect x="46.20" y="212.0" width="1.05" height="1.3" fill="#d4d4d4"/><rect x="47.25" y="212.0" width="11.55" height="1.3" fill="#4ec9b0"/><rect x="58.80" y="212.0" width="1.05" height="1.3" fill="#d4d4d4"/><rect x="59.85" y="212.0" width="1.05" height="1.3" fill="#d4d4d4"/><rect x="6.30" y="214.0" width="5.25" height="1.3" fill="#dcdcaa"/><rect x="11.55" y="214.0" width="1.05" height="1.3" fill="#d4d4d4"/><rect x="12.60" y="214.0" width="1.05" height="1.3" fill="#d4d4d4"/><rect x="8.40" y="216.0" width="5.25" height="1.3" fill="#9cdcfe"/><rect x="13.65" y="216.0" width="1.05" height="1.3" fill="#d4d4d4"/><rect x="15.75" y="216.0" width="7.35" height="1.3" fill="#ce9178"/><rect x="23.10" y="216.0" width="1.05" height="1.3" fill="#d4d4d4"/><rect x="8.40" y="218.0" width="11.55" height="1.3" fill="#9cdcfe"/><rect x="19.95" y="218.0" width="1.05" height="1.3" fill="#d4d4d4"/><rect x="10.50" y="220.0" width="10.50" height="1.3" fill="#9cdcfe"/><rect x="21.00" y="220.0" width="1.05" height="1.3" fill="#d4d4d4"/><rect x="22.05" y="220.0" width="8.40" height="1.3" fill="#9cdcfe"/><rect x="30.45" y="220.0" width="1.05" height="1.3" fill="#d4d4d4"/><rect x="31.50" y="220.0" width="1.05" height="1.3" fill="#d4d4d4"/><rect x="32.55" y="220.0" width="4.20" height="1.3" fill="#9cdcfe"/><rect x="36.75" y="220.0" width="1.05" height="1.3" fill="#d4d4d4"/><rect x="37.80" y="220.0" width="7.35" height="1.3" fill="#9cdcfe"/><rect x="46.20" y="220.0" width="1.05" height="1.3" fill="#d4d4d4"/><rect x="47.25" y="220.0" width="1.05" height="1.3" fill="#d4d4d4"/><rect x="10.50" y="222.0" width="36.75" height="1.3" fill="#ce9178"/><rect x="47.25" y="222.0" width="1.05" height="1.3" fill="#d4d4d4"/><rect x="8.40" y="224.0" width="7.35" height="1.3" fill="#9cdcfe"/><rect x="15.75" y="224.0" width="1.05" height="1.3" fill="#d4d4d4"/><rect x="17.85" y="224.0" width="13.65" height="1.3" fill="#ce9178"/><rect x="31.50" y="224.0" width="1.05" height="1.3" fill="#d4d4d4"/><rect x="6.30" y="226.0" width="1.05" height="1.3" fill="#d4d4d4"/><rect x="7.35" y="226.0" width="1.05" height="1.3" fill="#d4d4d4"/><rect x="8.40" y="226.0" width="1.05" height="1.3" fill="#d4d4d4"/><rect x="4.20" y="228.0" width="1.05" height="1.3" fill="#d4d4d4"/><rect x="2.10" y="230.0" width="1.05" height="1.3" fill="#d4d4d4"/><rect x="3.15" y="230.0" width="1.05" height="1.3" fill="#d4d4d4"/><rect x="2.10" y="234.0" width="2.10" height="1.3" fill="#c586c0"/><rect x="5.25" y="234.0" width="1.05" height="1.3" fill="#d4d4d4"/><rect x="6.30" y="234.0" width="1.05" height="1.3" fill="#d4d4d4"/><rect x="7.35" y="234.0" width="7.35" height="1.3" fill="#9cdcfe"/><rect x="15.75" y="234.0" width="1.05" height="1.3" fill="#d4d4d4"/><rect x="16.80" y="234.0" width="1.05" height="1.3" fill="#d4d4d4"/><rect x="18.90" y="234.0" width="1.05" height="1.3" fill="#d4d4d4"/><rect x="19.95" y="234.0" width="7.35" height="1.3" fill="#9cdcfe"/><rect x="27.30" y="234.0" width="1.05" height="1.3" fill="#d4d4d4"/><rect x="28.35" y="234.0" width="4.20" height="1.3" fill="#9cdcfe"/><rect x="32.55" y="234.0" width="1.05" height="1.3" fill="#d4d4d4"/><rect x="34.65" y="234.0" width="1.05" height="1.3" fill="#d4d4d4"/><rect x="4.20" y="236.0" width="6.30" height="1.3" fill="#c586c0"/><rect x="11.55" y="236.0" width="1.05" height="1.3" fill="#d4d4d4"/><rect x="12.60" y="236.0" width="3.15" height="1.3" fill="#9cdcfe"/><rect x="15.75" y="236.0" width="1.05" height="1.3" fill="#d4d4d4"/><rect x="16.80" y="236.0" width="1.05" height="1.3" fill="#d4d4d4"/><rect x="17.85" y="236.0" width="1.05" height="1.3" fill="#d4d4d4"/><rect x="18.90" y="236.0" width="3.15" height="1.3" fill="#9cdcfe"/><rect x="22.05" y="236.0" width="1.05" height="1.3" fill="#d4d4d4"/><rect x="23.10" y="236.0" width="1.05" height="1.3" fill="#d4d4d4"/><rect x="2.10" y="238.0" width="1.05" height="1.3" fill="#d4d4d4"/><rect x="2.10" y="242.0" width="5.25" height="1.3" fill="#569cd6"/><rect x="8.40" y="242.0" width="1.05" height="1.3" fill="#d4d4d4"/><rect x="10.50" y="242.0" width="8.40" height="1.3" fill="#9cdcfe"/><rect x="19.95" y="242.0" width="1.05" height="1.3" fill="#d4d4d4"/><rect x="22.05" y="242.0" width="1.05" height="1.3" fill="#d4d4d4"/><rect x="24.15" y="242.0" width="7.35" height="1.3" fill="#9cdcfe"/><rect x="31.50" y="242.0" width="1.05" height="1.3" fill="#d4d4d4"/><rect x="32.55" y="242.0" width="4.20" height="1.3" fill="#9cdcfe"/><rect x="37.80" y="242.0" width="2.10" height="1.3" fill="#c586c0"/><rect x="40.95" y="242.0" width="4.20" height="1.3" fill="#4ec9b0"/><rect x="45.15" y="242.0" width="1.05" height="1.3" fill="#d4d4d4"/><rect x="2.10" y="246.0" width="5.25" height="1.3" fill="#569cd6"/><rect x="8.40" y="246.0" width="7.35" height="1.3" fill="#9cdcfe"/><rect x="16.80" y="246.0" width="1.05" height="1.3" fill="#d4d4d4"/><rect x="18.90" y="246.0" width="56.70" height="1.3" fill="#ce9178"/><rect x="75.60" y="246.0" width="1.05" height="1.3" fill="#d4d4d4"/><rect x="2.10" y="248.0" width="5.25" height="1.3" fill="#569cd6"/><rect x="8.40" y="248.0" width="10.50" height="1.3" fill="#9cdcfe"/><rect x="19.95" y="248.0" width="1.05" height="1.3" fill="#d4d4d4"/><rect x="22.05" y="248.0" width="27.30" height="1.3" fill="#ce9178"/><rect x="49.35" y="248.0" width="1.05" height="1.3" fill="#d4d4d4"/><rect x="2.10" y="252.0" width="5.25" height="1.3" fill="#569cd6"/><rect x="8.40" y="252.0" width="15.75" height="1.3" fill="#9cdcfe"/><rect x="25.20" y="252.0" width="1.05" height="1.3" fill="#d4d4d4"/><rect x="27.30" y="252.0" width="1.05" height="1.3" fill="#d4d4d4"/><rect x="28.35" y="252.0" width="1.05" height="1.3" fill="#d4d4d4"/><rect x="30.45" y="252.0" width="1.05" height="1.3" fill="#d4d4d4"/><rect x="31.50" y="252.0" width="1.05" height="1.3" fill="#d4d4d4"/><rect x="33.60" y="252.0" width="1.05" height="1.3" fill="#d4d4d4"/><rect x="4.20" y="254.0" width="9.45" height="1.3" fill="#9cdcfe"/><rect x="13.65" y="254.0" width="1.05" height="1.3" fill="#d4d4d4"/><rect x="14.70" y="254.0" width="9.45" height="1.3" fill="#9cdcfe"/><rect x="24.15" y="254.0" width="1.05" height="1.3" fill="#d4d4d4"/><rect x="25.20" y="254.0" width="9.45" height="1.3" fill="#dcdcaa"/><rect x="34.65" y="254.0" width="1.05" height="1.3" fill="#d4d4d4"/><rect x="35.70" y="254.0" width="10.50" height="1.3" fill="#9cdcfe"/><rect x="46.20" y="254.0" width="1.05" height="1.3" fill="#d4d4d4"/><rect x="47.25" y="254.0" width="1.05" height="1.3" fill="#d4d4d4"/><rect x="4.20" y="256.0" width="5.25" height="1.3" fill="#dcdcaa"/><rect x="9.45" y="256.0" width="1.05" height="1.3" fill="#d4d4d4"/><rect x="10.50" y="256.0" width="1.05" height="1.3" fill="#d4d4d4"/><rect x="6.30" y="258.0" width="5.25" height="1.3" fill="#9cdcfe"/><rect x="11.55" y="258.0" width="1.05" height="1.3" fill="#d4d4d4"/><rect x="13.65" y="258.0" width="13.65" height="1.3" fill="#ce9178"/><rect x="27.30" y="258.0" width="1.05" height="1.3" fill="#d4d4d4"/><rect x="6.30" y="260.0" width="11.55" height="1.3" fill="#9cdcfe"/><rect x="17.85" y="260.0" width="1.05" height="1.3" fill="#d4d4d4"/><rect x="19.95" y="260.0" width="45.15" height="1.3" fill="#ce9178"/><rect x="65.10" y="260.0" width="1.05" height="1.3" fill="#d4d4d4"/><rect x="4.20" y="262.0" width="1.05" height="1.3" fill="#d4d4d4"/><rect x="5.25" y="262.0" width="1.05" height="1.3" fill="#d4d4d4"/><rect x="6.30" y="262.0" width="1.05" height="1.3" fill="#d4d4d4"/><rect x="2.10" y="264.0" width="1.05" height="1.3" fill="#d4d4d4"/><rect x="3.15" y="264.0" width="1.05" height="1.3" fill="#d4d4d4"/><rect x="2.10" y="268.0" width="6.30" height="1.3" fill="#c586c0"/><rect x="9.45" y="268.0" width="1.05" height="1.3" fill="#d4d4d4"/><rect x="4.20" y="270.0" width="1.05" height="1.3" fill="#d4d4d4"/><rect x="5.25" y="270.0" width="3.15" height="1.3" fill="#9cdcfe"/><rect x="9.45" y="270.0" width="9.45" height="1.3" fill="#9cdcfe"/><rect x="18.90" y="270.0" width="1.05" height="1.3" fill="#d4d4d4"/><rect x="19.95" y="270.0" width="71.40" height="1.3" fill="#ce9178"/><rect x="91.35" y="270.0" width="1.05" height="1.3" fill="#d4d4d4"/><rect x="6.30" y="272.0" width="1.05" height="1.3" fill="#d4d4d4"/><rect x="7.35" y="272.0" width="2.10" height="1.3" fill="#9cdcfe"/><rect x="10.50" y="272.0" width="9.45" height="1.3" fill="#9cdcfe"/><rect x="19.95" y="272.0" width="1.05" height="1.3" fill="#d4d4d4"/><rect x="21.00" y="272.0" width="26.25" height="1.3" fill="#ce9178"/><rect x="47.25" y="272.0" width="1.05" height="1.3" fill="#d4d4d4"/><rect x="48.30" y="272.0" width="4.20" height="1.3" fill="#4ec9b0"/><rect x="53.55" y="272.0" width="9.45" height="1.3" fill="#4ec9b0"/><rect x="63.00" y="272.0" width="1.05" height="1.3" fill="#d4d4d4"/><rect x="64.05" y="272.0" width="1.05" height="1.3" fill="#d4d4d4"/><rect x="65.10" y="272.0" width="2.10" height="1.3" fill="#9cdcfe"/><rect x="67.20" y="272.0" width="1.05" height="1.3" fill="#d4d4d4"/><rect x="6.30" y="276.0" width="1.05" height="1.3" fill="#d4d4d4"/><rect x="7.35" y="276.0" width="3.15" height="1.3" fill="#9cdcfe"/><rect x="11.55" y="276.0" width="9.45" height="1.3" fill="#9cdcfe"/><rect x="21.00" y="276.0" width="1.05" height="1.3" fill="#d4d4d4"/><rect x="22.05" y="276.0" width="6.30" height="1.3" fill="#ce9178"/><rect x="28.35" y="276.0" width="1.05" height="1.3" fill="#d4d4d4"/><rect x="8.40" y="278.0" width="1.05" height="1.3" fill="#d4d4d4"/><rect x="9.45" y="278.0" width="2.10" height="1.3" fill="#9cdcfe"/><rect x="12.60" y="278.0" width="9.45" height="1.3" fill="#9cdcfe"/><rect x="22.05" y="278.0" width="1.05" height="1.3" fill="#d4d4d4"/><rect x="23.10" y="278.0" width="29.40" height="1.3" fill="#ce9178"/><rect x="52.50" y="278.0" width="1.05" height="1.3" fill="#d4d4d4"/><rect x="53.55" y="278.0" width="4.20" height="1.3" fill="#4ec9b0"/><rect x="58.80" y="278.0" width="4.20" height="1.3" fill="#4ec9b0"/><rect x="64.05" y="278.0" width="6.30" height="1.3" fill="#4ec9b0"/><rect x="71.40" y="278.0" width="4.20" height="1.3" fill="#4ec9b0"/><rect x="75.60" y="278.0" width="1.05" height="1.3" fill="#d4d4d4"/><rect x="76.65" y="278.0" width="1.05" height="1.3" fill="#d4d4d4"/><rect x="77.70" y="278.0" width="2.10" height="1.3" fill="#9cdcfe"/><rect x="79.80" y="278.0" width="1.05" height="1.3" fill="#d4d4d4"/><rect x="80.85" y="278.0" width="1.05" height="1.3" fill="#d4d4d4"/><rect x="81.90" y="278.0" width="3.15" height="1.3" fill="#ce9178"/><rect x="85.05" y="278.0" width="1.05" height="1.3" fill="#d4d4d4"/><rect x="8.40" y="280.0" width="1.05" height="1.3" fill="#d4d4d4"/><rect x="9.45" y="280.0" width="3.15" height="1.3" fill="#9cdcfe"/><rect x="13.65" y="280.0" width="9.45" height="1.3" fill="#9cdcfe"/><rect x="23.10" y="280.0" width="1.05" height="1.3" fill="#d4d4d4"/><rect x="24.15" y="280.0" width="19.95" height="1.3" fill="#ce9178"/><rect x="44.10" y="280.0" width="1.05" height="1.3" fill="#d4d4d4"/><rect x="10.50" y="282.0" width="1.05" height="1.3" fill="#d4d4d4"/><rect x="11.55" y="282.0" width="5.25" height="1.3" fill="#9cdcfe"/><rect x="12.60" y="284.0" width="4.20" height="1.3" fill="#9cdcfe"/><rect x="16.80" y="284.0" width="1.05" height="1.3" fill="#d4d4d4"/><rect x="17.85" y="284.0" width="6.30" height="1.3" fill="#ce9178"/><rect x="12.60" y="286.0" width="5.25" height="1.3" fill="#9cdcfe"/><rect x="17.85" y="286.0" width="1.05" height="1.3" fill="#d4d4d4"/><rect x="18.90" y="286.0" width="1.05" height="1.3" fill="#d4d4d4"/><rect x="19.95" y="286.0" width="10.50" height="1.3" fill="#9cdcfe"/><rect x="30.45" y="286.0" width="1.05" height="1.3" fill="#d4d4d4"/><rect x="12.60" y="288.0" width="8.40" height="1.3" fill="#9cdcfe"/><rect x="12.60" y="290.0" width="9.45" height="1.3" fill="#9cdcfe"/><rect x="22.05" y="290.0" width="1.05" height="1.3" fill="#d4d4d4"/><rect x="23.10" y="290.0" width="39.90" height="1.3" fill="#ce9178"/><rect x="10.50" y="292.0" width="1.05" height="1.3" fill="#d4d4d4"/><rect x="11.55" y="292.0" width="1.05" height="1.3" fill="#d4d4d4"/><rect x="10.50" y="294.0" width="1.05" height="1.3" fill="#d4d4d4"/><rect x="11.55" y="294.0" width="6.30" height="1.3" fill="#4ec9b0"/><rect x="18.90" y="294.0" width="7.35" height="1.3" fill="#9cdcfe"/><rect x="26.25" y="294.0" width="1.05" height="1.3" fill="#d4d4d4"/><rect x="27.30" y="294.0" width="1.05" height="1.3" fill="#d4d4d4"/><rect x="28.35" y="294.0" width="15.75" height="1.3" fill="#9cdcfe"/><rect x="44.10" y="294.0" width="1.05" height="1.3" fill="#d4d4d4"/><rect x="45.15" y="294.0" width="1.05" height="1.3" fill="#d4d4d4"/><rect x="46.20" y="294.0" width="4.20" height="1.3" fill="#4ec9b0"/><rect x="50.40" y="294.0" width="1.05" height="1.3" fill="#d4d4d4"/><rect x="51.45" y="294.0" width="1.05" height="1.3" fill="#d4d4d4"/><rect x="52.50" y="294.0" width="6.30" height="1.3" fill="#4ec9b0"/><rect x="58.80" y="294.0" width="1.05" height="1.3" fill="#d4d4d4"/><rect x="8.40" y="296.0" width="1.05" height="1.3" fill="#d4d4d4"/><rect x="9.45" y="296.0" width="1.05" height="1.3" fill="#d4d4d4"/><rect x="10.50" y="296.0" width="3.15" height="1.3" fill="#9cdcfe"/><rect x="13.65" y="296.0" width="1.05" height="1.3" fill="#d4d4d4"/><rect x="6.30" y="298.0" width="1.05" height="1.3" fill="#d4d4d4"/><rect x="7.35" y="298.0" width="1.05" height="1.3" fill="#d4d4d4"/><rect x="8.40" y="298.0" width="3.15" height="1.3" fill="#9cdcfe"/><rect x="11.55" y="298.0" width="1.05" height="1.3" fill="#d4d4d4"/><rect x="6.30" y="302.0" width="1.05" height="1.3" fill="#d4d4d4"/><rect x="7.35" y="302.0" width="3.15" height="1.3" fill="#9cdcfe"/><rect x="11.55" y="302.0" width="9.45" height="1.3" fill="#9cdcfe"/><rect x="21.00" y="302.0" width="1.05" height="1.3" fill="#d4d4d4"/><rect x="22.05" y="302.0" width="6.30" height="1.3" fill="#ce9178"/><rect x="28.35" y="302.0" width="1.05" height="1.3" fill="#d4d4d4"/><rect x="8.40" y="304.0" width="1.05" height="1.3" fill="#d4d4d4"/><rect x="9.45" y="304.0" width="6.30" height="1.3" fill="#4ec9b0"/><rect x="10.50" y="306.0" width="1.05" height="1.3" fill="#d4d4d4"/><rect x="11.55" y="306.0" width="1.05" height="1.3" fill="#d4d4d4"/><rect x="12.60" y="306.0" width="1.05" height="1.3" fill="#d4d4d4"/><rect x="13.65" y="306.0" width="1.05" height="1.3" fill="#d4d4d4"/><rect x="14.70" y="306.0" width="8.40" height="1.3" fill="#dcdcaa"/><rect x="23.10" y="306.0" width="1.05" height="1.3" fill="#d4d4d4"/><rect x="24.15" y="306.0" width="16.80" height="1.3" fill="#ce9178"/><rect x="40.95" y="306.0" width="1.05" height="1.3" fill="#d4d4d4"/><rect x="42.00" y="306.0" width="1.05" height="1.3" fill="#d4d4d4"/><rect x="10.50" y="308.0" width="7.35" height="1.3" fill="#9cdcfe"/><rect x="17.85" y="308.0" width="1.05" height="1.3" fill="#d4d4d4"/><rect x="18.90" y="308.0" width="1.05" height="1.3" fill="#d4d4d4"/><rect x="19.95" y="308.0" width="14.70" height="1.3" fill="#9cdcfe"/><rect x="34.65" y="308.0" width="1.05" height="1.3" fill="#d4d4d4"/><rect x="10.50" y="310.0" width="15.75" height="1.3" fill="#9cdcfe"/><rect x="26.25" y="310.0" width="1.05" height="1.3" fill="#d4d4d4"/><rect x="27.30" y="310.0" width="1.05" height="1.3" fill="#d4d4d4"/><rect x="28.35" y="310.0" width="18.90" height="1.3" fill="#9cdcfe"/><rect x="47.25" y="310.0" width="1.05" height="1.3" fill="#d4d4d4"/><rect x="10.50" y="312.0" width="8.40" height="1.3" fill="#9cdcfe"/><rect x="18.90" y="312.0" width="1.05" height="1.3" fill="#d4d4d4"/><rect x="19.95" y="312.0" width="1.05" height="1.3" fill="#d4d4d4"/><rect x="21.00" y="312.0" width="15.75" height="1.3" fill="#9cdcfe"/><rect x="36.75" y="312.0" width="1.05" height="1.3" fill="#d4d4d4"/><rect x="8.40" y="314.0" width="1.05" height="1.3" fill="#d4d4d4"/><rect x="9.45" y="314.0" width="1.05" height="1.3" fill="#d4d4d4"/><rect x="8.40" y="316.0" width="1.05" height="1.3" fill="#d4d4d4"/><rect x="9.45" y="316.0" width="4.20" height="1.3" fill="#9cdcfe"/><rect x="14.70" y="316.0" width="9.45" height="1.3" fill="#9cdcfe"/><rect x="24.15" y="316.0" width="1.05" height="1.3" fill="#d4d4d4"/><rect x="25.20" y="316.0" width="6.30" height="1.3" fill="#ce9178"/><rect x="31.50" y="316.0" width="1.05" height="1.3" fill="#d4d4d4"/><rect x="10.50" y="318.0" width="6.30" height="1.3" fill="#4ec9b0"/><rect x="17.85" y="318.0" width="8.40" height="1.3" fill="#4ec9b0"/><rect x="26.25" y="318.0" width="1.05" height="1.3" fill="#d4d4d4"/><rect x="28.35" y="318.0" width="1.05" height="1.3" fill="#d4d4d4"/><rect x="29.40" y="318.0" width="14.70" height="1.3" fill="#9cdcfe"/><rect x="45.15" y="318.0" width="1.05" height="1.3" fill="#d4d4d4"/><rect x="47.25" y="318.0" width="4.20" height="1.3" fill="#ce9178"/><rect x="52.50" y="318.0" width="1.05" height="1.3" fill="#d4d4d4"/><rect x="54.60" y="318.0" width="5.25" height="1.3" fill="#ce9178"/><rect x="59.85" y="318.0" width="1.05" height="1.3" fill="#d4d4d4"/><rect x="8.40" y="320.0" width="1.05" height="1.3" fill="#d4d4d4"/><rect x="9.45" y="320.0" width="1.05" height="1.3" fill="#d4d4d4"/><rect x="10.50" y="320.0" width="4.20" height="1.3" fill="#9cdcfe"/><rect x="14.70" y="320.0" width="1.05" height="1.3" fill="#d4d4d4"/><rect x="6.30" y="322.0" width="1.05" height="1.3" fill="#d4d4d4"/><rect x="7.35" y="322.0" width="1.05" height="1.3" fill="#d4d4d4"/><rect x="8.40" y="322.0" width="3.15" height="1.3" fill="#9cdcfe"/><rect x="11.55" y="322.0" width="1.05" height="1.3" fill="#d4d4d4"/><rect x="6.30" y="324.0" width="1.05" height="1.3" fill="#d4d4d4"/><rect x="7.35" y="324.0" width="9.45" height="1.3" fill="#4ec9b0"/><rect x="17.85" y="324.0" width="1.05" height="1.3" fill="#d4d4d4"/><rect x="18.90" y="324.0" width="1.05" height="1.3" fill="#d4d4d4"/><rect x="6.30" y="328.0" width="1.05" height="1.3" fill="#d4d4d4"/><rect x="7.35" y="328.0" width="6.30" height="1.3" fill="#4ec9b0"/><rect x="8.40" y="330.0" width="9.45" height="1.3" fill="#9cdcfe"/><rect x="17.85" y="330.0" width="1.05" height="1.3" fill="#d4d4d4"/><rect x="18.90" y="330.0" width="6.30" height="1.3" fill="#ce9178"/><rect x="8.40" y="332.0" width="7.35" height="1.3" fill="#9cdcfe"/><rect x="15.75" y="332.0" width="1.05" height="1.3" fill="#d4d4d4"/><rect x="16.80" y="332.0" width="9.45" height="1.3" fill="#ce9178"/><rect x="8.40" y="334.0" width="7.35" height="1.3" fill="#9cdcfe"/><rect x="15.75" y="334.0" width="1.05" height="1.3" fill="#d4d4d4"/><rect x="16.80" y="334.0" width="1.05" height="1.3" fill="#d4d4d4"/><rect x="17.85" y="334.0" width="1.05" height="1.3" fill="#d4d4d4"/><rect x="18.90" y="334.0" width="1.05" height="1.3" fill="#9cdcfe"/><rect x="19.95" y="334.0" width="1.05" height="1.3" fill="#d4d4d4"/><rect x="22.05" y="334.0" width="1.05" height="1.3" fill="#d4d4d4"/><rect x="23.10" y="334.0" width="1.05" height="1.3" fill="#d4d4d4"/><rect x="25.20" y="334.0" width="1.05" height="1.3" fill="#d4d4d4"/><rect x="10.50" y="336.0" width="1.05" height="1.3" fill="#9cdcfe"/><rect x="11.55" y="336.0" width="1.05" height="1.3" fill="#d4d4d4"/><rect x="12.60" y="336.0" width="14.70" height="1.3" fill="#dcdcaa"/><rect x="27.30" y="336.0" width="1.05" height="1.3" fill="#d4d4d4"/><rect x="28.35" y="336.0" width="1.05" height="1.3" fill="#d4d4d4"/><rect x="29.40" y="336.0" width="1.05" height="1.3" fill="#d4d4d4"/><rect x="10.50" y="338.0" width="13.65" height="1.3" fill="#dcdcaa"/><rect x="24.15" y="338.0" width="1.05" height="1.3" fill="#d4d4d4"/><rect x="25.20" y="338.0" width="4.20" height="1.3" fill="#569cd6"/><rect x="29.40" y="338.0" width="1.05" height="1.3" fill="#d4d4d4"/><rect x="30.45" y="338.0" width="1.05" height="1.3" fill="#d4d4d4"/><rect x="8.40" y="340.0" width="1.05" height="1.3" fill="#d4d4d4"/><rect x="9.45" y="340.0" width="1.05" height="1.3" fill="#d4d4d4"/><rect x="6.30" y="342.0" width="1.05" height="1.3" fill="#d4d4d4"/><rect x="8.40" y="344.0" width="1.05" height="1.3" fill="#d4d4d4"/><rect x="9.45" y="344.0" width="9.45" height="1.3" fill="#9cdcfe"/><rect x="19.95" y="344.0" width="1.05" height="1.3" fill="#d4d4d4"/><rect x="22.05" y="344.0" width="1.05" height="1.3" fill="#d4d4d4"/><rect x="10.50" y="346.0" width="1.05" height="1.3" fill="#d4d4d4"/><rect x="11.55" y="346.0" width="7.35" height="1.3" fill="#4ec9b0"/><rect x="19.95" y="346.0" width="9.45" height="1.3" fill="#9cdcfe"/><rect x="29.40" y="346.0" width="1.05" height="1.3" fill="#d4d4d4"/><rect x="30.45" y="346.0" width="23.10" height="1.3" fill="#ce9178"/><rect x="54.60" y="346.0" width="1.05" height="1.3" fill="#d4d4d4"/><rect x="55.65" y="346.0" width="1.05" height="1.3" fill="#d4d4d4"/><rect x="8.40" y="348.0" width="1.05" height="1.3" fill="#d4d4d4"/><rect x="10.50" y="348.0" width="1.05" height="1.3" fill="#d4d4d4"/><rect x="12.60" y="348.0" width="1.05" height="1.3" fill="#d4d4d4"/><rect x="10.50" y="350.0" width="1.05" height="1.3" fill="#d4d4d4"/><rect x="11.55" y="350.0" width="10.50" height="1.3" fill="#4ec9b0"/><rect x="23.10" y="350.0" width="9.45" height="1.3" fill="#9cdcfe"/><rect x="32.55" y="350.0" width="1.05" height="1.3" fill="#d4d4d4"/><rect x="33.60" y="350.0" width="9.45" height="1.3" fill="#ce9178"/><rect x="44.10" y="350.0" width="1.05" height="1.3" fill="#d4d4d4"/><rect x="45.15" y="350.0" width="1.05" height="1.3" fill="#d4d4d4"/><rect x="8.40" y="352.0" width="1.05" height="1.3" fill="#d4d4d4"/><rect x="9.45" y="352.0" width="1.05" height="1.3" fill="#d4d4d4"/><rect x="6.30" y="354.0" width="1.05" height="1.3" fill="#d4d4d4"/><rect x="7.35" y="354.0" width="1.05" height="1.3" fill="#d4d4d4"/><rect x="8.40" y="354.0" width="6.30" height="1.3" fill="#4ec9b0"/><rect x="14.70" y="354.0" width="1.05" height="1.3" fill="#d4d4d4"/><rect x="6.30" y="356.0" width="1.05" height="1.3" fill="#d4d4d4"/><rect x="7.35" y="356.0" width="3.15" height="1.3" fill="#9cdcfe"/><rect x="11.55" y="356.0" width="9.45" height="1.3" fill="#9cdcfe"/><rect x="21.00" y="356.0" width="1.05" height="1.3" fill="#d4d4d4"/><rect x="22.05" y="356.0" width="46.20" height="1.3" fill="#ce9178"/><rect x="68.25" y="356.0" width="1.05" height="1.3" fill="#d4d4d4"/><rect x="8.40" y="358.0" width="1.05" height="1.3" fill="#d4d4d4"/><rect x="9.45" y="358.0" width="8.40" height="1.3" fill="#9cdcfe"/><rect x="17.85" y="358.0" width="1.05" height="1.3" fill="#d4d4d4"/><rect x="18.90" y="358.0" width="6.30" height="1.3" fill="#9cdcfe"/><rect x="26.25" y="358.0" width="1.05" height="1.3" fill="#d4d4d4"/><rect x="28.35" y="358.0" width="1.05" height="1.3" fill="#d4d4d4"/><rect x="30.45" y="358.0" width="1.05" height="1.3" fill="#d4d4d4"/><rect x="32.55" y="358.0" width="1.05" height="1.3" fill="#d4d4d4"/><rect x="10.50" y="360.0" width="8.40" height="1.3" fill="#9cdcfe"/><rect x="18.90" y="360.0" width="1.05" height="1.3" fill="#d4d4d4"/><rect x="19.95" y="360.0" width="3.15" height="1.3" fill="#dcdcaa"/><rect x="23.10" y="360.0" width="1.05" height="1.3" fill="#d4d4d4"/><rect x="24.15" y="360.0" width="1.05" height="1.3" fill="#d4d4d4"/><rect x="25.20" y="360.0" width="7.35" height="1.3" fill="#9cdcfe"/><rect x="32.55" y="360.0" width="1.05" height="1.3" fill="#d4d4d4"/><rect x="34.65" y="360.0" width="5.25" height="1.3" fill="#9cdcfe"/><rect x="39.90" y="360.0" width="1.05" height="1.3" fill="#d4d4d4"/><rect x="42.00" y="360.0" width="1.05" height="1.3" fill="#d4d4d4"/><rect x="43.05" y="360.0" width="1.05" height="1.3" fill="#d4d4d4"/><rect x="45.15" y="360.0" width="1.05" height="1.3" fill="#d4d4d4"/><rect x="12.60" y="362.0" width="1.05" height="1.3" fill="#d4d4d4"/><rect x="13.65" y="362.0" width="11.55" height="1.3" fill="#4ec9b0"/><rect x="14.70" y="364.0" width="3.15" height="1.3" fill="#9cdcfe"/><rect x="17.85" y="364.0" width="1.05" height="1.3" fill="#d4d4d4"/><rect x="18.90" y="364.0" width="1.05" height="1.3" fill="#d4d4d4"/><rect x="19.95" y="364.0" width="7.35" height="1.3" fill="#9cdcfe"/><rect x="27.30" y="364.0" width="1.05" height="1.3" fill="#d4d4d4"/><rect x="28.35" y="364.0" width="3.15" height="1.3" fill="#9cdcfe"/><rect x="31.50" y="364.0" width="1.05" height="1.3" fill="#d4d4d4"/><rect x="14.70" y="366.0" width="7.35" height="1.3" fill="#9cdcfe"/><rect x="22.05" y="366.0" width="1.05" height="1.3" fill="#d4d4d4"/><rect x="23.10" y="366.0" width="1.05" height="1.3" fill="#d4d4d4"/><rect x="24.15" y="366.0" width="7.35" height="1.3" fill="#9cdcfe"/><rect x="31.50" y="366.0" width="1.05" height="1.3" fill="#d4d4d4"/><rect x="14.70" y="368.0" width="15.75" height="1.3" fill="#9cdcfe"/><rect x="30.45" y="368.0" width="1.05" height="1.3" fill="#d4d4d4"/><rect x="31.50" y="368.0" width="1.05" height="1.3" fill="#d4d4d4"/><rect x="32.55" y="368.0" width="19.95" height="1.3" fill="#9cdcfe"/><rect x="52.50" y="368.0" width="1.05" height="1.3" fill="#d4d4d4"/><rect x="12.60" y="370.0" width="1.05" height="1.3" fill="#d4d4d4"/><rect x="13.65" y="370.0" width="1.05" height="1.3" fill="#d4d4d4"/><rect x="10.50" y="372.0" width="1.05" height="1.3" fill="#d4d4d4"/><rect x="11.55" y="372.0" width="1.05" height="1.3" fill="#d4d4d4"/><rect x="8.40" y="374.0" width="1.05" height="1.3" fill="#d4d4d4"/><rect x="10.50" y="374.0" width="1.05" height="1.3" fill="#d4d4d4"/><rect x="12.60" y="374.0" width="1.05" height="1.3" fill="#d4d4d4"/><rect x="10.50" y="376.0" width="1.05" height="1.3" fill="#d4d4d4"/><rect x="11.55" y="376.0" width="1.05" height="1.3" fill="#9cdcfe"/><rect x="12.60" y="376.0" width="1.05" height="1.3" fill="#d4d4d4"/><rect x="13.65" y="376.0" width="2.10" height="1.3" fill="#4ec9b0"/><rect x="16.80" y="376.0" width="8.40" height="1.3" fill="#9cdcfe"/><rect x="26.25" y="376.0" width="2.10" height="1.3" fill="#9cdcfe"/><rect x="29.40" y="376.0" width="7.35" height="1.3" fill="#9cdcfe"/><rect x="36.75" y="376.0" width="1.05" height="1.3" fill="#d4d4d4"/><rect x="37.80" y="376.0" width="1.05" height="1.3" fill="#d4d4d4"/><rect x="38.85" y="376.0" width="1.05" height="1.3" fill="#d4d4d4"/><rect x="39.90" y="376.0" width="1.05" height="1.3" fill="#9cdcfe"/><rect x="40.95" y="376.0" width="1.05" height="1.3" fill="#d4d4d4"/><rect x="8.40" y="378.0" width="1.05" height="1.3" fill="#d4d4d4"/><rect x="9.45" y="378.0" width="1.05" height="1.3" fill="#d4d4d4"/><rect x="6.30" y="380.0" width="1.05" height="1.3" fill="#d4d4d4"/><rect x="7.35" y="380.0" width="1.05" height="1.3" fill="#d4d4d4"/><rect x="8.40" y="380.0" width="3.15" height="1.3" fill="#9cdcfe"/><rect x="11.55" y="380.0" width="1.05" height="1.3" fill="#d4d4d4"/><rect x="4.20" y="382.0" width="1.05" height="1.3" fill="#d4d4d4"/><rect x="5.25" y="382.0" width="1.05" height="1.3" fill="#d4d4d4"/><rect x="6.30" y="382.0" width="3.15" height="1.3" fill="#9cdcfe"/><rect x="9.45" y="382.0" width="1.05" height="1.3" fill="#d4d4d4"/><rect x="2.10" y="384.0" width="1.05" height="1.3" fill="#d4d4d4"/><rect x="3.15" y="384.0" width="1.05" height="1.3" fill="#d4d4d4"/><rect x="0.00" y="386.0" width="1.05" height="1.3" fill="#d4d4d4"/><rect x="0.00" y="390.0" width="6.30" height="1.3" fill="#c586c0"/><rect x="7.35" y="390.0" width="7.35" height="1.3" fill="#c586c0"/><rect x="15.75" y="390.0" width="13.65" height="1.3" fill="#4ec9b0"/><rect x="29.40" y="390.0" width="1.05" height="1.3" fill="#d4d4d4"/></g><rect x="0" y="364" width="111" height="2" fill="#a02c2c" opacity="0.9"/></svg>
<div class="a" style="left:1899px;top:137.5px;width:1px;height:511px;background:#2b2b2b;"></div>
<div class="a" style="left:1900px;top:561px;width:20px;height:42px;background:#4a4a4a;opacity:0.75;"></div>
<div class="a" style="left:1913px;top:568px;width:7px;height:8px;background:#c74e39;"></div>
<div class="a" style="left:1900px;top:579px;width:20px;height:2.5px;background:#a0a0a0;"></div>
<div class="t" id="t90" style="transform:scaleX(0.8702);left:357.5px;top:667.83px;font-size:16.5px;font-family:'Liberation Sans', sans-serif;color:#9d9d9d;font-weight:400;">PROBLEMS</div>
<div class="a" style="left:452.8px;top:662px;width:32px;height:27px;background:#616161;border-radius:13.5px;"></div>
<div class="t" id="t91" style="transform:scaleX(0.9918);left:460.5px;top:667.53px;font-size:16.5px;font-family:'Liberation Sans', sans-serif;color:#ffffff;font-weight:400;">11</div>
<div class="t" id="t92" style="transform:scaleX(0.8954);left:518.75px;top:667.83px;font-size:16.5px;font-family:'Liberation Sans', sans-serif;color:#9d9d9d;font-weight:400;">OUTPUT</div>
<div class="t" id="t93" style="transform:scaleX(0.8857);left:616.25px;top:667.83px;font-size:16.5px;font-family:'Liberation Sans', sans-serif;color:#9d9d9d;font-weight:400;">DEBUG CONSOLE</div>
<div class="t" id="t94" style="transform:scaleX(0.9169);left:780.8px;top:667.83px;font-size:16.5px;font-family:'Liberation Sans', sans-serif;color:#e7e7e7;font-weight:400;">TERMINAL</div>
<div class="a" style="left:777px;top:691.5px;width:83px;height:1.6px;background:#0078d4;"></div>
<div class="t" id="t95" style="transform:scaleX(0.8489);left:893.3px;top:667.83px;font-size:16.5px;font-family:'Liberation Sans', sans-serif;color:#9d9d9d;font-weight:400;">PORTS</div>
<svg class="a" style="left:1535px;top:663px;" width="26" height="24" viewBox="0 0 26 24"><path d="M5.5 1.5H24.5L20.5 22.5H1.5Z" fill="none" stroke="#cccccc" stroke-width="1.6" stroke-linejoin="round"/><path d="M7.5 7.5L12 11L7.5 14.5M11.5 17.5H17" fill="none" stroke="#cccccc" stroke-width="1.6"/></svg>
<div class="t" id="t96" style="transform:scaleX(0.8533);left:1566.25px;top:666.42px;font-size:19px;font-family:'Liberation Sans', sans-serif;color:#cccccc;font-weight:400;">powershell</div>
<svg class="a" style="left:1659px;top:664px;" width="22" height="21" viewBox="0 0 22 21"><path d="M11 0.5V20.5M0.5 10.5H21.5" stroke="#cccccc" stroke-width="1.7"/></svg>
<svg class="a" style="left:1688px;top:671px;" width="14" height="9" viewBox="0 0 14 9"><path d="M1 1.5L7 7.5L13 1.5" fill="none" stroke="#cccccc" stroke-width="1.5"/></svg>
<svg class="a" style="left:1719px;top:664px;" width="22" height="21" viewBox="0 0 22 21"><rect x="1" y="1" width="20" height="19" rx="2.5" fill="none" stroke="#cccccc" stroke-width="1.7"/><path d="M11 1v19" stroke="#cccccc" stroke-width="1.7"/></svg>
<svg class="a" style="left:1759px;top:663px;" width="18" height="22" viewBox="0 0 18 22"><path d="M1 4.5H17M6 4.5V1.5H12V4.5M2.8 4.5L4 20.5H14L15.2 4.5M7 8V17M11 8V17" fill="none" stroke="#cccccc" stroke-width="1.6"/></svg>
<div class="a" style="left:1797.4px;top:673.5px;width:3.2px;height:3.2px;background:#cccccc;border-radius:50%;"></div>
<div class="a" style="left:1805.4px;top:673.5px;width:3.2px;height:3.2px;background:#cccccc;border-radius:50%;"></div>
<div class="a" style="left:1813.4px;top:673.5px;width:3.2px;height:3.2px;background:#cccccc;border-radius:50%;"></div>
<svg class="a" style="left:1838px;top:669px;" width="16" height="10" viewBox="0 0 16 10"><path d="M1 9L8 1.5L15 9" fill="none" stroke="#cccccc" stroke-width="1.6"/></svg>
<svg class="a" style="left:1878px;top:668px;" width="15" height="15" viewBox="0 0 15 15"><path d="M1 1L14 14M14 1L1 14" stroke="#cccccc" stroke-width="1.6"/></svg>
<div class="t" id="t97" style="left:357px;top:735.05px;font-size:18.33px;font-family:'Liberation Mono', monospace;color:#cccccc;font-weight:400;"><span style="color:#cccccc">found </span><span style="color:#23d18b">0</span><span style="color:#cccccc"> vulnerabilities</span></div>
<div class="t" id="t98" style="left:357px;top:761.05px;font-size:18.33px;font-family:'Liberation Mono', monospace;color:#cccccc;font-weight:400;"><span style="color:#cccccc">PS C:\Users\DELL\.vscode\mysterymessage&gt; </span><span style="color:#f5f543">npm</span><span style="color:#cccccc"> install dayjs </span><span style="color:#767676">--save</span></div>
<div class="t" id="t99" style="left:357px;top:813.05px;font-size:18.33px;font-family:'Liberation Mono', monospace;color:#cccccc;font-weight:400;"><span style="color:#cccccc">added 1 package, and audited 559 packages in 3s</span></div>
<div class="t" id="t100" style="left:357px;top:865.05px;font-size:18.33px;font-family:'Liberation Mono', monospace;color:#cccccc;font-weight:400;"><span style="color:#cccccc">164 packages are looking for funding</span></div>
<div class="t" id="t101" style="left:357px;top:891.05px;font-size:18.33px;font-family:'Liberation Mono', monospace;color:#cccccc;font-weight:400;"><span style="color:#cccccc">  run `npm fund` for details</span></div>
<div class="t" id="t102" style="left:357px;top:943.05px;font-size:18.33px;font-family:'Liberation Mono', monospace;color:#cccccc;font-weight:400;"><span style="color:#cccccc">found </span><span style="color:#23d18b">0</span><span style="color:#cccccc"> vulnerabilities</span></div>
<div class="t" id="t103" style="left:357px;top:969.05px;font-size:18.33px;font-family:'Liberation Mono', monospace;color:#cccccc;font-weight:400;"><span style="color:#cccccc">PS C:\Users\DELL\.vscode\mysterymessage&gt; </span></div>
<div class="a" style="left:808.5px;top:962.5px;width:11.5px;height:26px;box-sizing:border-box;border:1.5px solid #cccccc;"></div>
<div class="a" style="left:1899px;top:700px;width:1px;height:287px;background:#2b2b2b;"></div>
<div class="a" style="left:0px;top:988px;width:51px;height:32px;background:#0078d4;"></div>
<svg class="a" style="left:18px;top:993px;" width="18" height="22" viewBox="0 0 18 22"><path d="M1 7L7.5 12.5L1 18M14 2L7.5 7.5L14 13" fill="none" stroke="#ffffff" stroke-width="1.6"/></svg>
<svg class="a" style="left:63px;top:994px;" width="20" height="20" viewBox="0 0 20 20"><circle cx="10" cy="10" r="8.7" fill="none" stroke="#cccccc" stroke-width="1.5"/><path d="M6.5 6.5L13.5 13.5M13.5 6.5L6.5 13.5" stroke="#cccccc" stroke-width="1.5"/></svg>
<div class="t" id="t104" style="transform:scaleX(0.8348);left:90.6px;top:995.26px;font-size:18px;font-family:'Liberation Sans', sans-serif;color:#cccccc;font-weight:400;">11</div>
<svg class="a" style="left:114px;top:993px;" width="20" height="19" viewBox="0 0 20 19"><path d="M10 1.5L18.5 17.5H1.5Z" fill="none" stroke="#cccccc" stroke-width="1.5" stroke-linejoin="round"/><path d="M10 7V12.5M10 14V15.8" stroke="#cccccc" stroke-width="1.7"/></svg>
<div class="t" id="t105" style="transform:scaleX(0.9984);left:139px;top:995.26px;font-size:18px;font-family:'Liberation Sans', sans-serif;color:#cccccc;font-weight:400;">0</div>
<svg class="a" style="left:174px;top:993px;" width="20" height="20" viewBox="0 0 20 20"><path d="M4 2C1 5 1 11 4 14M16 2C19 5 19 11 16 14M6.5 4.5C5 6.5 5 9.5 6.5 11.5M13.5 4.5C15 6.5 15 9.5 13.5 11.5" fill="none" stroke="#cccccc" stroke-width="1.5"/><circle cx="10" cy="8" r="1.8" fill="none" stroke="#cccccc" stroke-width="1.4"/><path d="M10 10L6.5 19M10 10L13.5 19M7.5 16H12.5" fill="none" stroke="#cccccc" stroke-width="1.4"/></svg>
<div class="t" id="t106" style="transform:scaleX(0.9984);left:199px;top:995.26px;font-size:18px;font-family:'Liberation Sans', sans-serif;color:#cccccc;font-weight:400;">0</div>
<div class="t" id="t107" style="transform:scaleX(0.9445);left:1238.6px;top:995.26px;font-size:18px;font-family:'Liberation Sans', sans-serif;color:#cccccc;font-weight:400;">Ln 186, Col 15</div>
<div class="t" id="t108" style="transform:scaleX(0.9030);left:1374.4px;top:995.26px;font-size:18px;font-family:'Liberation Sans', sans-serif;color:#cccccc;font-weight:400;">Spaces: 2</div>
<div class="t" id="t109" style="transform:scaleX(0.9118);left:1471.5px;top:995.26px;font-size:18px;font-family:'Liberation Sans', sans-serif;color:#cccccc;font-weight:400;">UTF-8</div>
<div class="t" id="t110" style="transform:scaleX(0.8380);left:1542.3px;top:995.26px;font-size:18px;font-family:'Liberation Sans', sans-serif;color:#cccccc;font-weight:400;">CRLF</div>
<div class="t" id="t111" style="transform:scaleX(0.9864);left:1605px;top:995.26px;font-size:18px;font-family:'Liberation Sans', sans-serif;color:#cccccc;font-weight:400;">{ }</div>
<div class="t" id="t112" style="transform:scaleX(0.9240);left:1633px;top:995.26px;font-size:18px;font-family:'Liberation Sans', sans-serif;color:#cccccc;font-weight:400;">TypeScript JSX</div>
<svg class="a" style="left:1769px;top:993px;" width="19" height="20" viewBox="0 0 19 20"><circle cx="9.5" cy="8.5" r="7.5" fill="none" stroke="#cccccc" stroke-width="1.5"/><circle cx="9.5" cy="8.5" r="4" fill="none" stroke="#cccccc" stroke-width="1.5"/><path d="M9.5 8V19" stroke="#cccccc" stroke-width="2.6"/></svg>
<div class="t" id="t113" style="transform:scaleX(0.9364);left:1793.6px;top:995.26px;font-size:18px;font-family:'Liberation Sans', sans-serif;color:#cccccc;font-weight:400;">Go Live</div>
<svg class="a" style="left:1877px;top:993px;" width="20" height="21" viewBox="0 0 20 21"><path d="M10 1.5C6 1.5 3.5 4.5 3.5 8.5V13.5L1.5 16.5H18.5L16.5 13.5V8.5C16.5 4.5 14 1.5 10 1.5Z" fill="none" stroke="#cccccc" stroke-width="1.5" stroke-linejoin="round"/><path d="M7.5 18.5C8 20 12 20 12.5 18.5" fill="none" stroke="#cccccc" stroke-width="1.5"/></svg>
<svg class="a" style="left:23.5px;top:1037.5px;" width="25" height="25" viewBox="0 0 25 25"><path d="M0 3.4L10.2 2V11.8H0ZM11.4 1.8L25 0V11.8H11.4ZM0 13H10.2V23L0 21.6ZM11.4 13H25V25L11.4 23.2Z" fill="#000000"/></svg>
<div class="a" style="left:72.5px;top:1020.5px;width:432px;height:59.5px;background:#ffffff;box-sizing:border-box;border:1.5px solid #cccccc;border-bottom-width:2px;"></div>
<svg class="a" style="left:89px;top:1038px;" width="26" height="25" viewBox="0 0 26 25"><circle cx="16" cy="9.5" r="8" fill="none" stroke="#000" stroke-width="1.6"/><path d="M10.3 15.2L1 24.5" stroke="#000" stroke-width="1.6"/></svg>
<div class="t" id="t114" style="transform:scaleX(1.0340);left:132.8px;top:1041.50px;font-size:21.5px;font-family:'Liberation Sans', sans-serif;color:#1a1a1a;font-weight:400;">Type here to search</div>
<svg class="a" style="left:414px;top:1020px;" width="68" height="60" viewBox="0 0 68 60"><defs><linearGradient id="pw" x1="0" y1="1" x2="1" y2="0"><stop offset="0" stop-color="#f8c818"/><stop offset="1" stop-color="#f06818"/></linearGradient><linearGradient id="pb" x1="0" y1="0" x2="1" y2="0"><stop offset="0" stop-color="#f86040"/><stop offset="1" stop-color="#e02808"/></linearGradient></defs>
<path d="M20 34C19 24 26 14.5 35 14.5C44 14.5 49.5 22 49.5 30V60H26Z" fill="url(#pb)"/>
<ellipse cx="34.2" cy="24.5" rx="4.8" ry="6.5" fill="#f0ebe4"/>
<circle cx="34.2" cy="21.6" r="2.5" fill="#111" stroke="#b07030" stroke-width="0.7"/>
<path d="M26 24C30 26 34 32 33.5 35C31 37 27 36 25.8 34C25 30 25 27 26 24Z" fill="#4a3a2a"/>
<path d="M21 22C17.5 23 17 28 19 33C21 37 23 39 25 40C24 34 25 28 27 25C26 22 23 21.5 21 22Z" fill="#e8ddb0"/>
<path d="M4 60C10 50 16 43 24 39C32 38 39 42 38 48C37 54 32 58 26 60Z" fill="url(#pw)"/>
<path d="M20 60C24 57 30 56 35 55.5L33 60Z" fill="#2a66c0"/>
<path d="M2.5 16.2C8 20 14 19 18 13C24 5 29 1 34.6 0.8C40 1 45 5 49 13C52 18 58 20 64.5 18C62 24 56 27 50 27.5L49.5 27C48 20 43 15 35 14.5C27 15 22 20 20 26.8C12 25 5 21 2.5 16.2Z" fill="#4a3b28"/>
<path d="M2.5 16.2C8 20 14 19 18 13C24 5 29 1 34.6 0.8C40 1 45 5 49 13C52 18 58 20 64.5 18" fill="none" stroke="#d4a820" stroke-width="1.4"/></svg>
<svg class="a" style="left:527px;top:1037px;" width="26" height="25" viewBox="0 0 26 25"><path d="M1 1.5H14M1 23.5H14M3 4.5H12.5V20.5H3Z" fill="none" stroke="#111" stroke-width="1.5"/><path d="M24 0.5V24.5" stroke="#111" stroke-width="1.5"/><rect x="22" y="8" width="4" height="4" fill="#111"/></svg>
<svg class="a" style="left:598px;top:1032px;" width="38" height="35" viewBox="0 0 38 35"><defs><linearGradient id="cp1" x1="0" y1="0" x2="0" y2="1"><stop offset="0" stop-color="#22b0f8"/><stop offset="0.5" stop-color="#3aa58a"/><stop offset="1" stop-color="#f4cc08"/></linearGradient><linearGradient id="cp2" x1="0" y1="0" x2="0" y2="1"><stop offset="0" stop-color="#b050f0"/><stop offset="0.5" stop-color="#ee5090"/><stop offset="1" stop-color="#fba858"/></linearGradient></defs>
<path d="M22 1.3C25 1.3 27 3 28 6L29.8 10.8H21.5L24.4 1.3Z" fill="#1a50d8"/>
<path d="M9.6 24.5H19.8L16.3 33.3C13.8 33.3 12.3 32 11.7 30Z" fill="#f05a38"/>
<path d="M9 1.3H24.4L13.8 24.5H4.5C2.6 24.5 1.8 23 2.4 21L7 3.5C7.4 2.2 8 1.3 9 1.3Z" fill="url(#cp1)"/>
<path d="M24 10.6H34.3C35.8 10.6 36.6 12 36 14L30.5 31C30 32.5 29 33.3 27.5 33.3H16Z" fill="url(#cp2)"/></svg>
<svg class="a" style="left:676px;top:1035px;" width="33" height="30" viewBox="0 0 33 30"><path d="M0 3C0 1.5 1 0.5 2.5 0.5H11L14 3.5H30.5C32 3.5 33 4.5 33 6V27C33 28.5 32 29.5 30.5 29.5H2.5C1 29.5 0 28.5 0 27Z" fill="#f0c040"/><path d="M0 7H33V27C33 28.5 32 29.5 30.5 29.5H2.5C1 29.5 0 28.5 0 27Z" fill="#ffd864"/><path d="M9 29.5V18H24V29.5H20.5V21.5H12.5V29.5Z" fill="#2a7fd8"/></svg>
<svg class="a" style="left:748px;top:1032px;" width="37" height="37" viewBox="0 0 37 37"><circle cx="18.5" cy="18.5" r="18" fill="#34a853"/>
<path d="M18.5 0.5A18 18 0 0 1 34.09 9.5H18.5A9 9 0 0 0 10.7 14L2.9 9.5A18 18 0 0 1 18.5 0.5Z" fill="#ea4335"/>
<path d="M34.09 9.5A18 18 0 0 1 18.5 36.5L26.3 23A9 9 0 0 0 26.3 14Z" fill="#fbbc04"/>
<path d="M2.9 9.5L10.7 23A9 9 0 0 0 18.5 27.5L12 36A18 18 0 0 1 2.9 9.5Z" fill="#34a853"/>
<circle cx="18.5" cy="18.5" r="8.3" fill="#ffffff"/><circle cx="18.5" cy="18.5" r="6.6" fill="#4285f4"/></svg>
<div class="a" style="left:737px;top:1077px;width:60.5px;height:3px;background:#0078d4;"></div>
<svg class="a" style="left:823px;top:1032px;" width="38" height="37" viewBox="0 0 38 37"><path d="M18.5 2C9.5 2 2.5 9 2.5 18C2.5 21 3.3 23.8 4.8 26.2L2 35L11 32.3C13.2 33.5 15.8 34.2 18.5 34.2C27.5 34.2 34.5 27 34.5 18C34.5 9 27.5 2 18.5 2Z" fill="none" stroke="#1e8a50" stroke-width="3"/><path d="M12.5 10.5C11 12 11 14.5 12.5 17.5C14.5 21.5 17.5 24.5 21 26C23.5 27 25.5 26.5 26.5 25L25.5 22L22 20.5L20.5 22C18.5 21 16.5 19 15.5 17L17 15.5L15.5 11.5Z" fill="#1e8a50"/></svg>
<div class="a" style="left:849px;top:1050px;width:23.5px;height:23.5px;background:#d0d0d0;border-radius:50%;box-sizing:border-box;border:1px solid #888;"></div>
<div class="t" id="t115" style="transform:scaleX(0.8459);left:853.5px;top:1054.33px;font-size:16.5px;font-family:'Liberation Sans', sans-serif;color:#000000;font-weight:400;">11</div>
<svg class="a" style="left:898px;top:1032px;" width="37" height="37" viewBox="0 0 37 37"><defs><linearGradient id="eg1" x1="0" y1="0" x2="1" y2="1"><stop offset="0" stop-color="#35c1f1"/><stop offset="0.5" stop-color="#1fa2e0"/><stop offset="1" stop-color="#66eb6e"/></linearGradient><linearGradient id="eg2" x1="0" y1="0" x2="0" y2="1"><stop offset="0" stop-color="#0c59a4"/><stop offset="1" stop-color="#114a8b"/></linearGradient></defs>
<path d="M33.5 26C30.5 32 24.5 36 17.5 36C7.5 36 0.5 28 0.5 18.5C0.5 8 8.5 0.5 18.5 0.5C28 0.5 36.5 7.5 36.5 16.5C36.5 22 32 25 27 25C22 25 19.5 23 19.5 20.5C19.5 19 20.5 18.5 20.5 17C20.5 13 16 10.5 12 10.5C6 10.5 2 15 2 20Z" fill="url(#eg1)"/>
<path d="M2 20C2 29 9 36 17.5 36C24.5 36 30.5 32 33.5 26C31 27.5 28 28.5 25 28.5C17 28.5 11 23 11 17C11 14 12 12 13.5 10.7C7 11.5 2 15 2 20Z" fill="url(#eg2)"/></svg>
<div class="a" style="left:887px;top:1077px;width:60.5px;height:3px;background:#0078d4;"></div>
<svg class="a" style="left:975px;top:1035.5px;" width="33" height="27.5" viewBox="0 0 33 27.5"><defs><radialGradient id="cg" cx="0.2" cy="0.1" r="0.75"><stop offset="0" stop-color="#555"/><stop offset="0.5" stop-color="#2a2a2a"/><stop offset="0.51" stop-color="#000"/><stop offset="1" stop-color="#000"/></radialGradient></defs><rect x="0" y="0" width="33" height="27.5" rx="1" fill="#b8c3d2"/><rect x="1.2" y="3.2" width="30.5" height="22.5" fill="url(#cg)"/><path d="M6 6.5C4.5 6.5 4 7.5 4 9C4 10.5 4.5 11.5 6 11.5M8 7.5V8.3M8 10.5V11.3M10.5 6.5L14.5 10.8M15 11.5H19.5" stroke="#ddd" stroke-width="1" fill="none"/><circle cx="24" cy="1.6" r="0.8" fill="#4a5a78"/><circle cx="27" cy="1.6" r="0.8" fill="#4a5a78"/><circle cx="30" cy="1.6" r="0.8" fill="#4a5a78"/></svg>
<div class="a" style="left:962px;top:1077px;width:60.5px;height:3px;background:#0078d4;"></div>
<div class="a" style="left:1031px;top:1020px;width:72.5px;height:60px;background:#f6f1eb;"></div>
<svg class="a" style="left:1048.5px;top:1032px;" width="37" height="37" viewBox="0 0 37 37"><path fill="#0a7dcc" d="M35.7 4L28.1.3a2.3 2.3 0 0 0-2.6.45L11 14 4.65 9.2a1.54 1.54 0 0 0-1.97.09L.5 11.2a1.54 1.54 0 0 0 0 2.28L6 18.5.5 23.5a1.54 1.54 0 0 0 0 2.28l2.18 1.98a1.54 1.54 0 0 0 1.97.09L11 23l14.5 13.25a2.3 2.3 0 0 0 2.63.45l7.62-3.67A2.3 2.3 0 0 0 37 30.9V6.07A2.3 2.3 0 0 0 35.7 4zM27.77 26.9L16.7 18.5l11.07-8.4z"/><path fill="#27a6ee" d="M28.1.3a2.3 2.3 0 0 0-2.6.45L27.77 10.1V26.9L25.5 36.25a2.3 2.3 0 0 0 2.63.45l7.62-3.67A2.3 2.3 0 0 0 37 30.9V6.07A2.3 2.3 0 0 0 35.7 4z"/></svg>
<div class="a" style="left:1031px;top:1077px;width:72.5px;height:3px;background:#0078d4;"></div>
<svg class="a" style="left:1123px;top:1032px;" width="37" height="37" viewBox="0 0 37 37"><g transform="rotate(45 18.5 18.5)"><rect x="4" y="4" width="13.5" height="13.5" rx="2.5" fill="#f77e7e"/><rect x="19.5" y="4" width="13.5" height="13.5" rx="2.5" fill="#86d060"/><rect x="19.5" y="19.5" width="13.5" height="13.5" rx="2.5" fill="#f8e070"/><rect x="4" y="19.5" width="13.5" height="13.5" rx="2.5" fill="#80b0fa"/></g><path d="M16 6L20 16L25 21" stroke="#eee2d5" stroke-width="1.8" fill="none"/><circle cx="25" cy="21" r="2.5" fill="#eee2d5"/><circle cx="18.5" cy="28" r="2.5" fill="#eee2d5"/></svg>
<div class="a" style="left:1112px;top:1077px;width:60.5px;height:3px;background:#0078d4;"></div>
<svg class="a" style="left:1250px;top:1025px;" width="50" height="45" viewBox="0 0 50 45"><defs><linearGradient id="wsun" x1="0" y1="0" x2="1" y2="1"><stop offset="0" stop-color="#f5c020"/><stop offset="1" stop-color="#f06a08"/></linearGradient><linearGradient id="wcl" x1="0" y1="0" x2="0" y2="1"><stop offset="0" stop-color="#b8d0f5"/><stop offset="1" stop-color="#e2ecfa"/></linearGradient></defs>
<circle cx="24.7" cy="28.7" r="14" fill="url(#wsun)"/>
<path d="M9.5 20.4C7.5 20.4 7 18.5 7 17C7 15 8.5 13.5 10.5 13.8C11 10 14 7 18 7C21.5 7 24 9.5 24.5 12.5C25.5 13.5 26 14.5 26 16V20.4Z" fill="url(#wcl)" stroke="#6a98e0" stroke-width="0.9"/>
<path d="M25 38.9C23 38.9 22.4 37 22.4 35.5C22.4 33.5 24 32 26 32.3C26.5 28.5 29.5 25.2 33.5 25.2C37 25.2 39.5 27.5 40 30.5C42 31 43 33 43 35C43 37 42 38.9 40 38.9Z" fill="url(#wcl)" stroke="#6a98e0" stroke-width="0.9"/>
<circle cx="34" cy="15.7" r="8.8" fill="#c4281c"/></svg>
<div class="t" id="t116" style="left:1281px;top:1034.05px;font-size:14px;font-family:'Liberation Sans', sans-serif;color:#ffffff;font-weight:400;">1</div>
<div class="t" id="t117" style="transform:scaleX(0.8846);left:1305px;top:1040.80px;font-size:21.5px;font-family:'Liberation Sans', sans-serif;color:#111111;font-weight:400;">31°C</div>
<div class="t" id="t118" style="transform:scaleX(0.9466);left:1361px;top:1040.80px;font-size:21.5px;font-family:'Liberation Sans', sans-serif;color:#111111;font-weight:400;">Partly sunny</div>
<svg class="a" style="left:1510px;top:1043px;" width="20" height="12" viewBox="0 0 20 12"><path d="M1 11L9.5 2L18 11" fill="none" stroke="#111" stroke-width="1.5"/></svg>
<svg class="a" style="left:1545px;top:1040px;" width="22" height="22" viewBox="0 0 22 22"><circle cx="11" cy="11" r="10" fill="none" stroke="#111" stroke-width="1.7"/><circle cx="11" cy="11" r="5" fill="#111"/></svg>
<svg class="a" style="left:1579px;top:1041px;" width="26" height="17" viewBox="0 0 26 17"><path d="M5 0V5M9 0V5M3.5 5H10.5V8.5C10.5 10.5 9 12 7 12C5 12 3.5 10.5 3.5 8.5Z" fill="none" stroke="#111" stroke-width="1.3"/><path d="M7 12V16" stroke="#111" stroke-width="1.3"/><rect x="9" y="3" width="15" height="12" fill="none" stroke="#111" stroke-width="1.5"/><rect x="10.5" y="4.5" width="12" height="9" fill="#111"/><rect x="24" y="6.5" width="2" height="5" fill="#111"/></svg>
<svg class="a" style="left:1619px;top:1040px;" width="22" height="21" viewBox="0 0 22 21"><path d="M1 19C2 10 10 2 20 1M5 19C6 12 12 6 20 5M9 19C10 14 14 10 20 9M13 19C14 16 16 14 20 13" fill="none" stroke="#111" stroke-width="1.3"/><circle cx="19" cy="19" r="2" fill="#111"/></svg>
<svg class="a" style="left:1652px;top:1040px;" width="24" height="21" viewBox="0 0 24 21"><path d="M1 7H6L12 1V20L6 14H1Z" fill="none" stroke="#111" stroke-width="1.4" stroke-linejoin="round"/><path d="M15.5 7C17 9 17 12 15.5 14M18.5 4.5C21 8 21 13 18.5 16.5M21.5 2C25 7 25 14 21.5 19" fill="none" stroke="#111" stroke-width="1.4"/></svg>
<div class="t" id="t119" style="transform:scaleX(0.8106);left:1692.5px;top:1028.84px;font-size:18.5px;font-family:'Liberation Sans', sans-serif;color:#111111;font-weight:400;">ENG</div>
<div class="t" id="t120" style="transform:scaleX(0.7781);left:1698.75px;top:1056.14px;font-size:18.5px;font-family:'Liberation Sans', sans-serif;color:#111111;font-weight:400;">US</div>
<div class="t" id="t121" style="transform:scaleX(0.9179);left:1755.5px;top:1028.84px;font-size:18.5px;font-family:'Liberation Sans', sans-serif;color:#111111;font-weight:400;">3:41 PM</div>
<div class="t" id="t122" style="transform:scaleX(1.0023);left:1746.25px;top:1056.14px;font-size:18.5px;font-family:'Liberation Sans', sans-serif;color:#111111;font-weight:400;">9/19/2024</div>
<svg class="a" style="left:1857px;top:1038px;" width="25" height="24" viewBox="0 0 25 24"><path d="M0 0H24.5V17.5H8L3 23V17.5H0Z" fill="#111"/><path d="M5 5H19.5M5 9H19.5M5 13H14" stroke="#eee2d5" stroke-width="1.2"/></svg>
<div class="a" style="left:1870px;top:1049.5px;width:23px;height:23.5px;background:#d8d8d8;border-radius:50%;box-sizing:border-box;border:1px solid #888;"></div>
<div class="t" id="t123" style="left:1876px;top:1053.61px;font-size:17px;font-family:'Liberation Sans', sans-serif;color:#000000;font-weight:400;">8</div>
<div class="a" style="left:1913px;top:1020px;width:1px;height:60px;background:#bfb5a8;"></div>
</body></html>
